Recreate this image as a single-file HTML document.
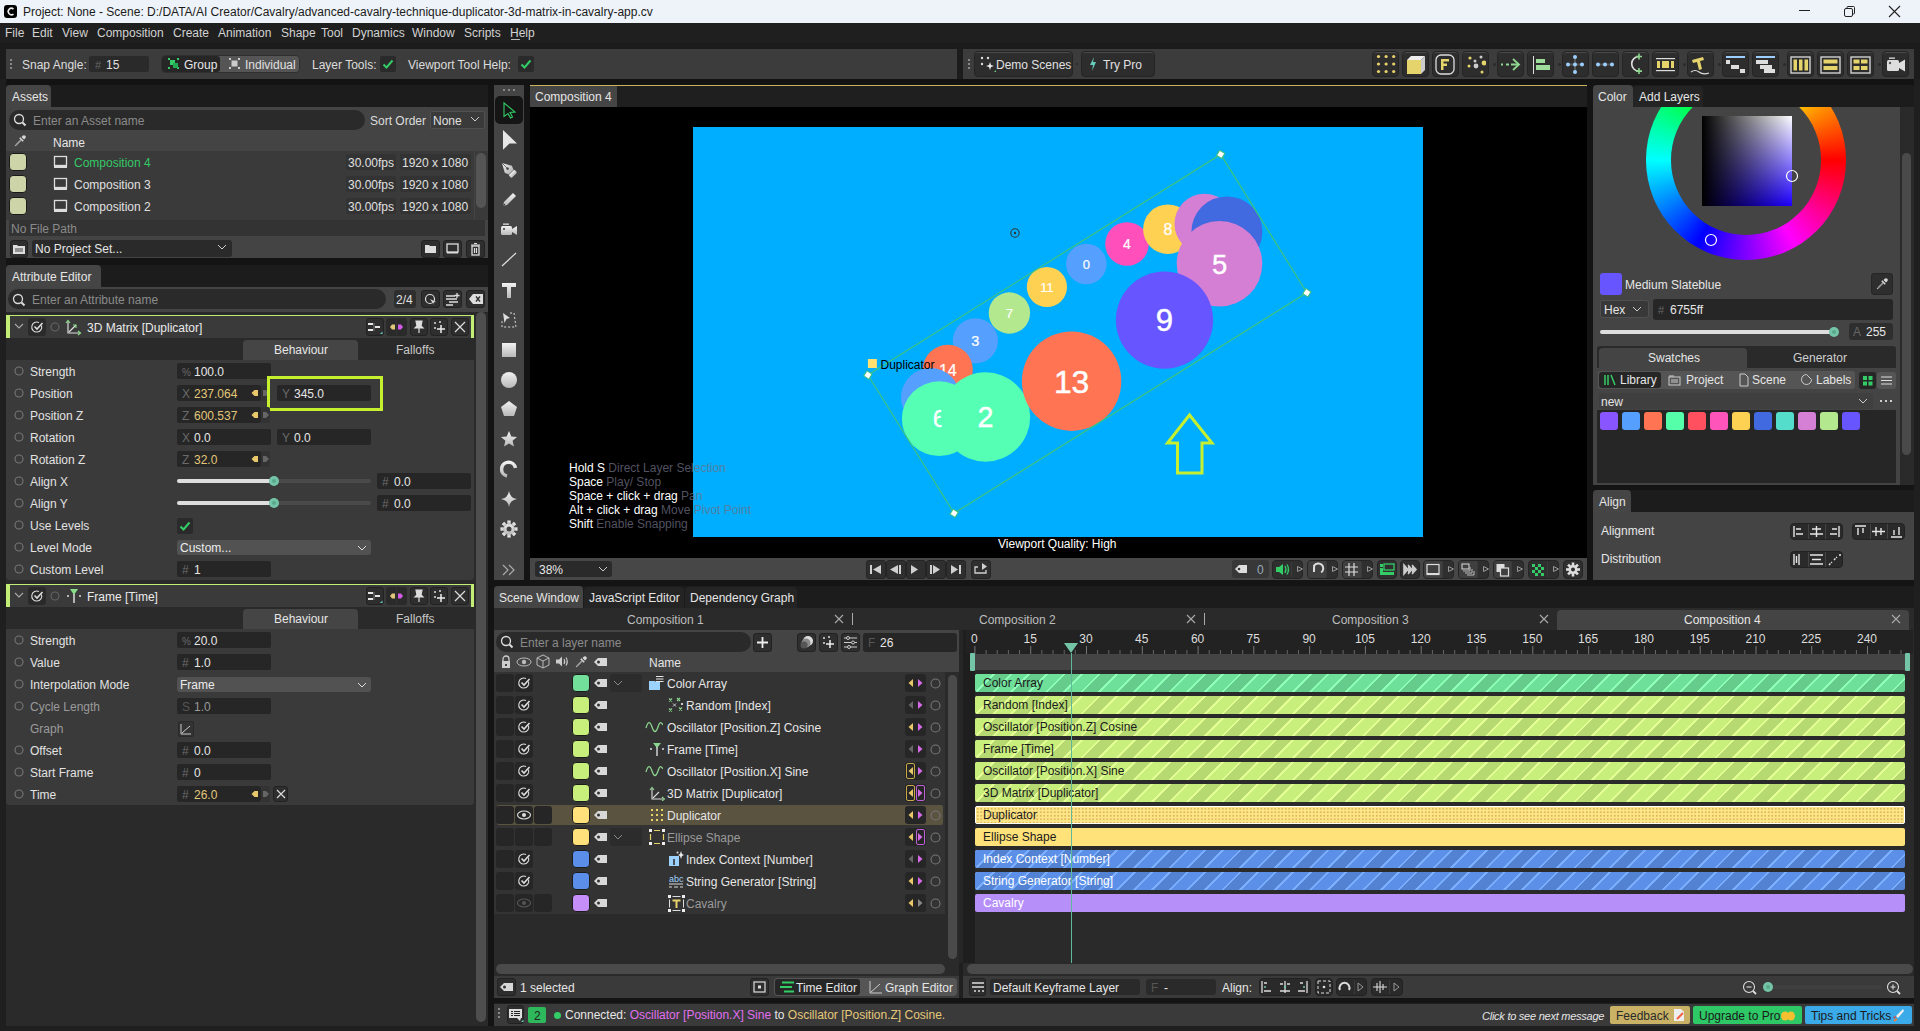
<!DOCTYPE html><html><head><meta charset="utf-8"><style>
*{margin:0;padding:0;box-sizing:border-box}
html,body{width:1920px;height:1031px;overflow:hidden;background:#1f1f1f;font-family:"Liberation Sans",sans-serif;font-size:12px;color:#d6d6d6}
.a{position:absolute}
.t{position:absolute;white-space:nowrap;line-height:14px}
</style></head><body><div class="a" style="left:0px;top:0px;width:1920px;height:23px;background:#eef3f9;"></div>
<div class="a" style="left:4px;top:5px;width:13px;height:13px;background:#000;border-radius:3px"></div>
<svg class="a" style="left:4px;top:5px;" width="13" height="13" viewBox="0 0 13 13"><path d="M9.5 4 A3.2 3.2 0 1 0 9.5 9" stroke="#eee" stroke-width="1.6" fill="none"/></svg>
<div class="t" style="left:23px;top:5px;font-size:12px;color:#1b1b1b;">Project: None - Scene: D:/DATA/AI Creator/Cavalry/advanced-cavalry-technique-duplicator-3d-matrix-in-cavalry-app.cv</div>
<div class="a" style="left:1799px;top:10px;width:11px;height:1px;background:#222;"></div>
<svg class="a" style="left:1843px;top:5px;" width="13" height="13" viewBox="0 0 13 13"><rect x="1.5" y="3.5" width="8" height="8" rx="1.5" fill="none" stroke="#222"/><path d="M4 3.5 V2.5 a1 1 0 0 1 1-1 H10.5 a1 1 0 0 1 1 1 V8 a1 1 0 0 1 -1 1 H9.5" fill="none" stroke="#222"/></svg>
<svg class="a" style="left:1888px;top:5px;" width="13" height="13" viewBox="0 0 13 13"><path d="M1 1 L12 12 M12 1 L1 12" stroke="#222" stroke-width="1.1"/></svg>
<div class="a" style="left:0px;top:23px;width:1920px;height:20px;background:#1f1f1f;"></div>
<div class="a" style="left:0px;top:43px;width:1920px;height:6px;background:#1b1b1b;"></div>
<div class="t" style="left:5px;top:26px;font-size:12px;color:#d2d2d2;">File</div>
<div class="t" style="left:32px;top:26px;font-size:12px;color:#d2d2d2;">Edit</div>
<div class="t" style="left:62px;top:26px;font-size:12px;color:#d2d2d2;">View</div>
<div class="t" style="left:97px;top:26px;font-size:12px;color:#d2d2d2;">Composition</div>
<div class="t" style="left:173px;top:26px;font-size:12px;color:#d2d2d2;">Create</div>
<div class="t" style="left:218px;top:26px;font-size:12px;color:#d2d2d2;">Animation</div>
<div class="t" style="left:281px;top:26px;font-size:12px;color:#d2d2d2;">Shape</div>
<div class="t" style="left:321px;top:26px;font-size:12px;color:#d2d2d2;">Tool</div>
<div class="t" style="left:352px;top:26px;font-size:12px;color:#d2d2d2;">Dynamics</div>
<div class="t" style="left:412px;top:26px;font-size:12px;color:#d2d2d2;">Window</div>
<div class="t" style="left:464px;top:26px;font-size:12px;color:#d2d2d2;">Scripts</div>
<div class="t" style="left:510px;top:26px;font-size:12px;color:#d2d2d2;">Help</div>
<div class="a" style="left:511px;top:39px;width:9px;height:1px;background:#bbb;"></div>
<div class="a" style="left:0px;top:49px;width:1920px;height:30px;background:#1c1c1c;"></div>
<div class="a" style="left:6px;top:49px;width:951px;height:30px;background:#3c3c3c;"></div>
<div class="a" style="left:963px;top:49px;width:951px;height:30px;background:#3c3c3c;"></div>
<div class="a" style="left:6px;top:79px;width:1908px;height:6px;background:#131313;"></div>
<div class="a" style="left:10px;top:59px;width:2px;height:2px;background:#888;"></div>
<div class="a" style="left:10px;top:63px;width:2px;height:2px;background:#888;"></div>
<div class="a" style="left:10px;top:67px;width:2px;height:2px;background:#888;"></div>
<div class="a" style="left:968px;top:59px;width:2px;height:2px;background:#888;"></div>
<div class="a" style="left:968px;top:63px;width:2px;height:2px;background:#888;"></div>
<div class="a" style="left:968px;top:67px;width:2px;height:2px;background:#888;"></div>
<div class="t" style="left:22px;top:58px;font-size:12px;color:#dcdcdc;">Snap Angle:</div>
<div class="a" style="left:89px;top:56px;width:60px;height:16px;background:#2a2a2a;border-radius:2px"></div>
<div class="t" style="left:95px;top:58px;font-size:11px;color:#666;">#</div>
<div class="t" style="left:106px;top:58px;font-size:12px;color:#e0e0e0;">15</div>
<div class="a" style="left:161px;top:55px;width:139px;height:18px;background:#555;border-radius:4px;border:1px solid #2f2f2f"></div>
<div class="a" style="left:162px;top:56px;width:58px;height:16px;background:#262626;border-radius:3px"></div>
<svg class="a" style="left:167px;top:57px;" width="13" height="13" viewBox="0 0 13 13"><rect x="1" y="1" width="2" height="2" fill="#3c6"/><rect x="10" y="1" width="2" height="2" fill="#3c6"/><rect x="1" y="10" width="2" height="2" fill="#3c6"/><rect x="10" y="10" width="2" height="2" fill="#3c6"/><rect x="3" y="3" width="5" height="5" fill="#3c6"/><rect x="6" y="6" width="5" height="5" fill="#2a5"/></svg>
<div class="t" style="left:184px;top:58px;font-size:12px;color:#e8e8e8;">Group</div>
<svg class="a" style="left:228px;top:57px;" width="13" height="13" viewBox="0 0 13 13"><rect x="1" y="1" width="2" height="2" fill="#ccc"/><rect x="10" y="1" width="2" height="2" fill="#ccc"/><rect x="1" y="10" width="2" height="2" fill="#ccc"/><rect x="10" y="10" width="2" height="2" fill="#ccc"/><rect x="3.5" y="3.5" width="6" height="6" fill="#ccc"/></svg>
<div class="t" style="left:245px;top:58px;font-size:12px;color:#e0e0e0;">Individual</div>
<div class="t" style="left:312px;top:58px;font-size:12px;color:#dcdcdc;">Layer Tools:</div>
<div class="a" style="left:380px;top:56px;width:16px;height:16px;background:#2a2a2a;border-radius:2px"></div>
<svg class="a" style="left:380px;top:56px;" width="16" height="16" viewBox="0 0 16 16"><path d="M3.5 8.5 L6.5 11.5 L12.5 4.5" stroke="#33cc66" stroke-width="2" fill="none"/></svg>
<div class="t" style="left:408px;top:58px;font-size:12px;color:#dcdcdc;">Viewport Tool Help:</div>
<div class="a" style="left:518px;top:56px;width:16px;height:16px;background:#2a2a2a;border-radius:2px"></div>
<svg class="a" style="left:518px;top:56px;" width="16" height="16" viewBox="0 0 16 16"><path d="M3.5 8.5 L6.5 11.5 L12.5 4.5" stroke="#33cc66" stroke-width="2" fill="none"/></svg>
<div class="a" style="left:974px;top:51px;width:99px;height:26px;background:#2d2d2d;border-radius:4px;border:1px solid #242424;box-shadow:inset 0 1px 0 #4a4a4a"></div>
<svg class="a" style="left:979px;top:55px;" width="18" height="18" viewBox="0 0 18 18"><circle cx="3" cy="3" r="1.2" fill="#ddd"/><circle cx="9" cy="3" r="1.2" fill="#ddd"/><circle cx="3" cy="9" r="1.2" fill="#ddd"/><path d="M11 7 L12 10 L15 11 L12 12 L11 15 L10 12 L7 11 L10 10Z" fill="#eee"/><path d="M15 17 L17 15 V17Z" fill="#6c8"/></svg>
<div class="t" style="left:996px;top:58px;font-size:12px;color:#e0e0e0;">Demo Scenes</div>
<div class="a" style="left:1076px;top:63px;width:2px;height:2px;background:#2a2a2a;border-radius:1px"></div>
<div class="a" style="left:1081px;top:51px;width:74px;height:26px;background:#2d2d2d;border-radius:4px;border:1px solid #242424;box-shadow:inset 0 1px 0 #4a4a4a"></div>
<svg class="a" style="left:1088px;top:56px;" width="10" height="16" viewBox="0 0 10 16"><path d="M6 1 L2 9 H5 L4 15 L8 6 H5 Z" fill="#6cb"/></svg>
<div class="t" style="left:1103px;top:58px;font-size:12px;color:#e0e0e0;">Try Pro</div>
<div class="a" style="left:1372px;top:51px;width:27px;height:26px;background:#2d2d2d;border-radius:4px;border:1px solid #242424;box-shadow:inset 0 1px 0 #4a4a4a"></div>
<div class="a" style="left:1402px;top:51px;width:27px;height:26px;background:#2d2d2d;border-radius:4px;border:1px solid #242424;box-shadow:inset 0 1px 0 #4a4a4a"></div>
<div class="a" style="left:1432px;top:51px;width:27px;height:26px;background:#2d2d2d;border-radius:4px;border:1px solid #242424;box-shadow:inset 0 1px 0 #4a4a4a"></div>
<div class="a" style="left:1462px;top:51px;width:27px;height:26px;background:#2d2d2d;border-radius:4px;border:1px solid #242424;box-shadow:inset 0 1px 0 #4a4a4a"></div>
<div class="a" style="left:1497px;top:51px;width:27px;height:26px;background:#2d2d2d;border-radius:4px;border:1px solid #242424;box-shadow:inset 0 1px 0 #4a4a4a"></div>
<div class="a" style="left:1527px;top:51px;width:27px;height:26px;background:#2d2d2d;border-radius:4px;border:1px solid #242424;box-shadow:inset 0 1px 0 #4a4a4a"></div>
<div class="a" style="left:1562px;top:51px;width:27px;height:26px;background:#2d2d2d;border-radius:4px;border:1px solid #242424;box-shadow:inset 0 1px 0 #4a4a4a"></div>
<div class="a" style="left:1592px;top:51px;width:27px;height:26px;background:#2d2d2d;border-radius:4px;border:1px solid #242424;box-shadow:inset 0 1px 0 #4a4a4a"></div>
<div class="a" style="left:1622px;top:51px;width:27px;height:26px;background:#2d2d2d;border-radius:4px;border:1px solid #242424;box-shadow:inset 0 1px 0 #4a4a4a"></div>
<div class="a" style="left:1652px;top:51px;width:27px;height:26px;background:#2d2d2d;border-radius:4px;border:1px solid #242424;box-shadow:inset 0 1px 0 #4a4a4a"></div>
<div class="a" style="left:1687px;top:51px;width:27px;height:26px;background:#2d2d2d;border-radius:4px;border:1px solid #242424;box-shadow:inset 0 1px 0 #4a4a4a"></div>
<div class="a" style="left:1722px;top:51px;width:27px;height:26px;background:#2d2d2d;border-radius:4px;border:1px solid #242424;box-shadow:inset 0 1px 0 #4a4a4a"></div>
<div class="a" style="left:1752px;top:51px;width:27px;height:26px;background:#2d2d2d;border-radius:4px;border:1px solid #242424;box-shadow:inset 0 1px 0 #4a4a4a"></div>
<div class="a" style="left:1787px;top:51px;width:27px;height:26px;background:#2d2d2d;border-radius:4px;border:1px solid #242424;box-shadow:inset 0 1px 0 #4a4a4a"></div>
<div class="a" style="left:1817px;top:51px;width:27px;height:26px;background:#2d2d2d;border-radius:4px;border:1px solid #242424;box-shadow:inset 0 1px 0 #4a4a4a"></div>
<div class="a" style="left:1847px;top:51px;width:27px;height:26px;background:#2d2d2d;border-radius:4px;border:1px solid #242424;box-shadow:inset 0 1px 0 #4a4a4a"></div>
<div class="a" style="left:1882px;top:51px;width:27px;height:26px;background:#2d2d2d;border-radius:4px;border:1px solid #242424;box-shadow:inset 0 1px 0 #4a4a4a"></div>
<div class="a" style="left:1493px;top:63px;width:3px;height:3px;background:#2a2a2a;border-radius:2px"></div>
<div class="a" style="left:1558px;top:63px;width:3px;height:3px;background:#2a2a2a;border-radius:2px"></div>
<div class="a" style="left:1683px;top:63px;width:3px;height:3px;background:#2a2a2a;border-radius:2px"></div>
<div class="a" style="left:1718px;top:63px;width:3px;height:3px;background:#2a2a2a;border-radius:2px"></div>
<div class="a" style="left:1783px;top:63px;width:3px;height:3px;background:#2a2a2a;border-radius:2px"></div>
<div class="a" style="left:1878px;top:63px;width:3px;height:3px;background:#2a2a2a;border-radius:2px"></div>
<svg class="a" style="left:1375px;top:53px;" width="23" height="23" viewBox="0 0 23 23"><circle cx="3.5" cy="3.5" r="1.6" fill="#e8d36a"/><circle cx="3.5" cy="11.0" r="1.6" fill="#e8d36a"/><circle cx="3.5" cy="18.5" r="1.6" fill="#e8d36a"/><circle cx="11.1" cy="3.5" r="1.6" fill="#e8d36a"/><circle cx="11.1" cy="11.0" r="1.6" fill="#e8d36a"/><circle cx="11.1" cy="18.5" r="1.6" fill="#e8d36a"/><circle cx="18.7" cy="3.5" r="1.6" fill="#e8d36a"/><circle cx="18.7" cy="11.0" r="1.6" fill="#e8d36a"/><circle cx="18.7" cy="18.5" r="1.6" fill="#e8d36a"/></svg>
<svg class="a" style="left:1404px;top:53px;" width="23" height="23" viewBox="0 0 23 23"><path d="M3 7 L7 3 H21 L17 7Z" fill="#eee"/><path d="M17 7 L21 3 V17 L17 21Z" fill="#ccc"/><rect x="3" y="7" width="14" height="14" fill="#e5d36b"/></svg>
<svg class="a" style="left:1434px;top:53px;" width="22" height="22" viewBox="0 0 22 22"><rect x="2" y="2" width="18" height="19" rx="5" fill="none" stroke="#ddd" stroke-width="1.3"/><rect x="7" y="6" width="2.5" height="11" fill="#e5d36b"/><rect x="9" y="6" width="6" height="2.5" fill="#e5d36b"/><rect x="9" y="10.5" width="4" height="2.5" fill="#e5d36b"/></svg>
<svg class="a" style="left:1464px;top:53px;" width="22" height="22" viewBox="0 0 22 22"><circle cx="6" cy="5" r="1.6" fill="#e5d36b"/><circle cx="17" cy="4" r="1.5" fill="#ccc"/><circle cx="11" cy="8" r="1.5" fill="#ccc"/><circle cx="20" cy="10" r="2.4" fill="#e5d36b"/><circle cx="5" cy="13" r="1.5" fill="#e5d36b"/><circle cx="12" cy="13" r="2.4" fill="#ccc"/><circle cx="18" cy="19" r="1.5" fill="#e5d36b"/></svg>
<svg class="a" style="left:1499px;top:53px;" width="22" height="22" viewBox="0 0 22 22"><path d="M2 11.5 H4 M7 11.5 H10 M12 11.5 H19" stroke="#8fd68f" stroke-width="2"/><path d="M14 6 L20 11.5 L14 17" stroke="#8fd68f" stroke-width="1.8" fill="none"/></svg>
<svg class="a" style="left:1529px;top:53px;" width="22" height="22" viewBox="0 0 22 22"><rect x="4" y="3" width="1" height="18" fill="#ddd"/><rect x="7" y="6" width="9" height="4" fill="#9ddc9a"/><rect x="7" y="12" width="14" height="5" fill="#9ddc9a"/></svg>
<svg class="a" style="left:1564px;top:53px;" width="22" height="22" viewBox="0 0 22 22"><rect x="10" y="3" width="2" height="17" fill="#555"/><rect x="3" y="10.5" width="17" height="2" fill="#555"/><circle cx="11" cy="4" r="2" fill="#9ccfff"/><circle cx="11" cy="11.5" r="2" fill="#9ccfff"/><circle cx="11" cy="19" r="2" fill="#9ccfff"/><circle cx="4" cy="11.5" r="2" fill="#9ccfff"/><circle cx="18" cy="11.5" r="2" fill="#9ccfff"/></svg>
<svg class="a" style="left:1594px;top:53px;" width="22" height="22" viewBox="0 0 22 22"><rect x="3" y="10.5" width="16" height="2" fill="#555"/><circle cx="4" cy="11.5" r="2" fill="#9ccfff"/><circle cx="11" cy="11.5" r="2" fill="#9ccfff"/><circle cx="18" cy="11.5" r="2" fill="#9ccfff"/></svg>
<svg class="a" style="left:1624px;top:53px;" width="22" height="22" viewBox="0 0 22 22"><path d="M15 3.5 A7.3 7.3 0 0 0 15 18.1" stroke="#ddd" stroke-width="1.6" fill="none"/><path d="M15 0.5 V6.5 M12 3.5 H18 M15 15.1 V21.1 M12 18.1 H18" stroke="#8fd68f" stroke-width="1.6"/></svg>
<svg class="a" style="left:1654px;top:53px;" width="22" height="22" viewBox="0 0 22 22"><rect x="2" y="5" width="19" height="1.2" fill="#ddd"/><rect x="2" y="17" width="19" height="1.2" fill="#ddd"/><rect x="3" y="8" width="3" height="7" fill="#e5d36b"/><rect x="8" y="8" width="7" height="7" fill="#e5d36b"/><rect x="17" y="8" width="3" height="7" fill="#e5d36b"/></svg>
<svg class="a" style="left:1689px;top:53px;" width="22" height="22" viewBox="0 0 22 22"><path d="M3 7 L14 4 L15 7 L11 8 L13 16 L10 17 L8 9 L4 10Z" fill="#e5d36b"/><path d="M2 19 Q6 16 10 19 T20 20" stroke="#ddd" stroke-width="1.2" fill="none"/></svg>
<svg class="a" style="left:1724px;top:53px;" width="22" height="22" viewBox="0 0 22 22"><rect x="2" y="3" width="19" height="2" fill="#9ccfff"/><rect x="2" y="7" width="4" height="4" fill="#ddd"/><rect x="7" y="12" width="8" height="4" fill="#ddd"/><rect x="16" y="16" width="5" height="4" fill="#ddd"/></svg>
<svg class="a" style="left:1754px;top:53px;" width="22" height="22" viewBox="0 0 22 22"><rect x="2" y="3" width="19" height="2" fill="#9ccfff"/><rect x="2" y="7" width="12" height="4" fill="#ddd"/><rect x="6" y="12" width="12" height="4" fill="#ddd"/><rect x="10" y="16" width="11" height="4" fill="#ddd"/></svg>
<svg class="a" style="left:1789px;top:53px;" width="22" height="22" viewBox="0 0 22 22"><rect x="2" y="4" width="19" height="16" fill="none" stroke="#ddd" stroke-width="1.3"/><rect x="4.5" y="6.5" width="3.5" height="11" fill="#e5d36b"/><rect x="10" y="6.5" width="3.5" height="11" fill="#e5d36b"/><rect x="15.5" y="6.5" width="3.5" height="11" fill="#e5d36b"/></svg>
<svg class="a" style="left:1819px;top:53px;" width="22" height="22" viewBox="0 0 22 22"><rect x="2" y="4" width="19" height="16" fill="none" stroke="#ddd" stroke-width="1.3"/><rect x="4.5" y="6.5" width="14" height="4" fill="#e5d36b"/><rect x="4.5" y="13" width="14" height="4" fill="#e5d36b"/></svg>
<svg class="a" style="left:1849px;top:53px;" width="22" height="22" viewBox="0 0 22 22"><rect x="2" y="4" width="19" height="16" fill="none" stroke="#ddd" stroke-width="1.3"/><rect x="4.5" y="6.5" width="6" height="4" fill="#e5d36b"/><rect x="12" y="6.5" width="6.5" height="4" fill="#e5d36b"/><rect x="4.5" y="13" width="6" height="4" fill="#e5d36b"/><rect x="12" y="13" width="6.5" height="4" fill="#e5d36b"/></svg>
<svg class="a" style="left:1884px;top:53px;" width="22" height="22" viewBox="0 0 22 22"><rect x="3" y="7" width="12" height="11" rx="1.5" fill="#ddd"/><path d="M15 10 L21 6.5 V18.5 L15 15Z" fill="#ddd"/><rect x="5" y="4.5" width="6" height="1.3" fill="#ddd"/><circle cx="6" cy="10" r="1.2" fill="#555"/></svg>
<div class="a" style="left:6px;top:85px;width:482px;height:22px;background:#1c1c1c;"></div>
<div class="a" style="left:6px;top:85px;width:45px;height:22px;background:#454545;border-radius:4px 4px 0 0"></div>
<div class="t" style="left:12px;top:90px;font-size:12px;color:#e6e6e6;">Assets</div>
<div class="a" style="left:6px;top:107px;width:482px;height:151px;background:#444;"></div>
<div class="a" style="left:9px;top:110px;width:356px;height:20px;background:#2a2a2a;border-radius:10px"></div>
<svg class="a" style="left:13px;top:113px;" width="14" height="14" viewBox="0 0 14 14"><circle cx="6" cy="6" r="4.5" stroke="#ddd" stroke-width="1.3" fill="none"/><path d="M9.5 9.5 L12.5 12.5" stroke="#ddd" stroke-width="2"/></svg>
<div class="t" style="left:33px;top:114px;font-size:12px;color:#8a8a8a;">Enter an Asset name</div>
<div class="t" style="left:370px;top:114px;font-size:12px;color:#dcdcdc;">Sort Order</div>
<div class="a" style="left:430px;top:111px;width:55px;height:18px;background:#3a3a3a;border-radius:2px;border:1px solid #505050"></div>
<div class="t" style="left:433px;top:114px;font-size:12px;color:#e0e0e0;">None</div>
<svg class="a" style="left:470px;top:116px;" width="10" height="6" viewBox="0 0 10 6"><path d="M1 1 L5 5 L9 1" stroke="#ccc" fill="none"/></svg>
<svg class="a" style="left:13px;top:134px;" width="14" height="14" viewBox="0 0 14 14"><path d="M8.5 3 L10 1.5 a1.8 1.8 0 0 1 2.5 2.5 L11 5.5 Z" fill="#d8d8d8"/><path d="M6.8 3.8 L10.2 7.2" stroke="#d8d8d8" stroke-width="1.6"/><path d="M8 5.5 L2.8 10.7 L2.2 11.8 L3.3 11.2 L8.5 6" fill="none" stroke="#bbb" stroke-width="1"/></svg>
<div class="t" style="left:53px;top:136px;font-size:12px;color:#e6e6e6;">Name</div>
<div class="a" style="left:6px;top:151px;width:468px;height:69px;background:#3a3a3a;"></div>
<div class="a" style="left:9px;top:153px;width:18px;height:18px;background:#cdd4a7;border-radius:4px;border:1px solid #1a1a1a"></div>
<svg class="a" style="left:53px;top:155px;" width="15" height="14" viewBox="0 0 15 14"><rect x="1.5" y="1.5" width="12" height="9" fill="none" stroke="#ddd" stroke-width="1.3"/><rect x="1" y="11" width="13" height="2" fill="#ddd"/></svg>
<div class="t" style="left:74px;top:156px;font-size:12px;color:#35c866;">Composition 4</div>
<div class="a" style="left:346px;top:154px;width:50px;height:16px;background:#333;border-radius:2px"></div>
<div class="t" style="left:348px;top:156px;font-size:12px;color:#e0e0e0;">30.00fps</div>
<div class="a" style="left:400px;top:154px;width:71px;height:16px;background:#333;border-radius:2px"></div>
<div class="t" style="left:402px;top:156px;font-size:12px;color:#e0e0e0;">1920 x 1080</div>
<div class="a" style="left:9px;top:175px;width:18px;height:18px;background:#cdd4a7;border-radius:4px;border:1px solid #1a1a1a"></div>
<svg class="a" style="left:53px;top:177px;" width="15" height="14" viewBox="0 0 15 14"><rect x="1.5" y="1.5" width="12" height="9" fill="none" stroke="#ddd" stroke-width="1.3"/><rect x="1" y="11" width="13" height="2" fill="#ddd"/></svg>
<div class="t" style="left:74px;top:178px;font-size:12px;color:#e0e0e0;">Composition 3</div>
<div class="a" style="left:346px;top:176px;width:50px;height:16px;background:#333;border-radius:2px"></div>
<div class="t" style="left:348px;top:178px;font-size:12px;color:#e0e0e0;">30.00fps</div>
<div class="a" style="left:400px;top:176px;width:71px;height:16px;background:#333;border-radius:2px"></div>
<div class="t" style="left:402px;top:178px;font-size:12px;color:#e0e0e0;">1920 x 1080</div>
<div class="a" style="left:9px;top:197px;width:18px;height:18px;background:#cdd4a7;border-radius:4px;border:1px solid #1a1a1a"></div>
<svg class="a" style="left:53px;top:199px;" width="15" height="14" viewBox="0 0 15 14"><rect x="1.5" y="1.5" width="12" height="9" fill="none" stroke="#ddd" stroke-width="1.3"/><rect x="1" y="11" width="13" height="2" fill="#ddd"/></svg>
<div class="t" style="left:74px;top:200px;font-size:12px;color:#e0e0e0;">Composition 2</div>
<div class="a" style="left:346px;top:198px;width:50px;height:16px;background:#333;border-radius:2px"></div>
<div class="t" style="left:348px;top:200px;font-size:12px;color:#e0e0e0;">30.00fps</div>
<div class="a" style="left:400px;top:198px;width:71px;height:16px;background:#333;border-radius:2px"></div>
<div class="t" style="left:402px;top:200px;font-size:12px;color:#e0e0e0;">1920 x 1080</div>
<div class="a" style="left:475px;top:151px;width:13px;height:69px;background:#3a3a3a;"></div>
<div class="a" style="left:476px;top:153px;width:10px;height:55px;background:#555;border-radius:5px"></div>
<div class="a" style="left:9px;top:220px;width:476px;height:16px;background:#333;"></div>
<div class="t" style="left:11px;top:222px;font-size:12px;color:#8a8a8a;">No File Path</div>
<div class="a" style="left:10px;top:240px;width:18px;height:18px;background:#2e2e2e;border-radius:3px;border:1px solid #222"></div>
<svg class="a" style="left:12px;top:243px;" width="14" height="12" viewBox="0 0 14 12"><path d="M1 2 H5 L6 3 H13 V11 H1Z" fill="#ddd"/><path d="M3 6 H11 M3 8 H11" stroke="#444" stroke-width="1"/></svg>
<div class="a" style="left:32px;top:240px;width:200px;height:17px;background:#2a2a2a;border-radius:3px"></div>
<div class="t" style="left:35px;top:242px;font-size:12px;color:#e6e6e6;">No Project Set...</div>
<svg class="a" style="left:217px;top:244px;" width="10" height="6" viewBox="0 0 10 6"><path d="M1 1 L5 5 L9 1" stroke="#ccc" fill="none"/></svg>
<div class="a" style="left:421px;top:240px;width:19px;height:18px;background:#2e2e2e;border-radius:3px;border:1px solid #222"></div>
<svg class="a" style="left:424px;top:243px;" width="13" height="11" viewBox="0 0 13 11"><path d="M1 2 H5 L6 3 H12 V10 H1Z" fill="#ddd"/></svg>
<div class="a" style="left:443px;top:240px;width:19px;height:18px;background:#2e2e2e;border-radius:3px;border:1px solid #222"></div>
<svg class="a" style="left:446px;top:243px;" width="13" height="11" viewBox="0 0 13 11"><rect x="1" y="1" width="11" height="8" fill="none" stroke="#ddd" stroke-width="1.3"/><rect x="1" y="9" width="11" height="1.5" fill="#ddd"/></svg>
<div class="a" style="left:466px;top:240px;width:19px;height:18px;background:#2e2e2e;border-radius:3px;border:1px solid #222"></div>
<svg class="a" style="left:469px;top:242px;" width="13" height="14" viewBox="0 0 13 14"><rect x="3" y="4" width="7" height="9" fill="none" stroke="#ddd" stroke-width="1.3"/><path d="M2 3 H11 M5 1.5 H8 M5.5 6 V11 M7.5 6 V11" stroke="#ddd" stroke-width="1.2"/></svg>
<div class="a" style="left:6px;top:258px;width:482px;height:7px;background:#1c1c1c;"></div>
<div class="a" style="left:6px;top:265px;width:482px;height:22px;background:#1c1c1c;"></div>
<div class="a" style="left:6px;top:265px;width:95px;height:22px;background:#454545;border-radius:4px 4px 0 0"></div>
<div class="t" style="left:12px;top:270px;font-size:12px;color:#e6e6e6;">Attribute Editor</div>
<div class="a" style="left:6px;top:287px;width:482px;height:25px;background:#444;"></div>
<div class="a" style="left:8px;top:289px;width:378px;height:20px;background:#2a2a2a;border-radius:10px"></div>
<svg class="a" style="left:12px;top:293px;" width="14" height="14" viewBox="0 0 14 14"><circle cx="6" cy="6" r="4.5" stroke="#ddd" stroke-width="1.3" fill="none"/><path d="M9.5 9.5 L12.5 12.5" stroke="#ddd" stroke-width="2"/></svg>
<div class="t" style="left:32px;top:293px;font-size:12px;color:#8a8a8a;">Enter an Attribute name</div>
<div class="a" style="left:394px;top:290px;width:22px;height:18px;background:#2e2e2e;border-radius:3px"></div>
<div class="t" style="left:396px;top:293px;font-size:12px;color:#e0e0e0;">2/4</div>
<div class="a" style="left:421px;top:290px;width:19px;height:18px;background:#2e2e2e;border-radius:3px;border:1px solid #222"></div>
<svg class="a" style="left:423px;top:292px;" width="15" height="15" viewBox="0 0 15 15"><circle cx="7" cy="7" r="4.5" stroke="#ddd" stroke-width="1.2" fill="none"/><path d="M7 7 L13 10 L10 10.5 L11 13Z" fill="#ddd"/></svg>
<div class="a" style="left:443px;top:290px;width:19px;height:18px;background:#2e2e2e;border-radius:3px;border:1px solid #222"></div>
<svg class="a" style="left:445px;top:292px;" width="15" height="14" viewBox="0 0 15 14"><path d="M1 4 H10 M1 7 H12 M4 10 H13 M1 13 H8" stroke="#ddd" stroke-width="1.6"/><path d="M12 1 V6 M9.5 3.5 H14.5" stroke="#ddd" stroke-width="1.3"/></svg>
<div class="a" style="left:466px;top:290px;width:19px;height:18px;background:#2e2e2e;border-radius:3px;border:1px solid #222"></div>
<svg class="a" style="left:468px;top:293px;" width="16" height="12" viewBox="0 0 16 12"><path d="M5 1 H15 V11 H5 L1 6Z" fill="#ddd"/><path d="M8 3.5 L12 8.5 M12 3.5 L8 8.5" stroke="#333" stroke-width="1.4"/></svg>
<div class="a" style="left:6px;top:312px;width:482px;height:716px;background:#2a2a2a;"></div>
<div class="a" style="left:476px;top:312px;width:10px;height:710px;background:#4e4e4e;border-radius:5px"></div>
<div class="a" style="left:6px;top:315px;width:468px;height:23px;background:#3a3a3a;border-left:4px solid #c3ee76;border-top:1px solid #c3ee76;border-right:3px solid #c3ee76"></div>
<svg class="a" style="left:14px;top:323px;" width="10" height="7" viewBox="0 0 10 7"><path d="M1 1 L5 5 L9 1" stroke="#aaa" fill="none" stroke-width="1.1"/></svg>
<div class="a" style="left:28px;top:318px;width:18px;height:18px;background:#2a2a2a;border-radius:3px"></div>
<svg class="a" style="left:30px;top:320px;" width="14" height="14" viewBox="0 0 14 14"><path d="M11.5 5.5 A5 5 0 1 1 9 2.6" stroke="#ddd" stroke-width="1.1" fill="none"/><path d="M4.5 6.5 L7 9 L12.5 3" stroke="#ddd" stroke-width="1.6" fill="none"/></svg>
<svg class="a" style="left:50px;top:322px;" width="10" height="10" viewBox="0 0 10 10"><circle cx="5" cy="5" r="4" stroke="#666" stroke-width="1.1" fill="none"/></svg>
<svg class="a" style="left:65px;top:318px" width="18" height="18" viewBox="0 0 18 18"><path d="M3 3 V15 H15" stroke="#ddd" stroke-width="1.2" fill="none"/><path d="M4 14 L11 7" stroke="#ddd" stroke-width="1.2"/><path d="M1 5 L3 2.5 L5 5 M13 13 L15.5 15 L13 17" stroke="#8d8" stroke-width="1.2" fill="none"/><path d="M8 7 H11 V10" stroke="#8d8" stroke-width="1.1" fill="none"/></svg>
<div class="t" style="left:87px;top:321px;font-size:12px;color:#eaeaea;">3D Matrix [Duplicator]</div>
<div class="a" style="left:366px;top:318px;width:18px;height:18px;background:#2e2e2e;border-radius:3px;border:1px solid #222"></div>
<svg class="a" style="left:366px;top:318px;" width="18" height="18" viewBox="0 0 18 18"><rect x="2" y="5" width="5" height="2" fill="#e6e6e6"/><rect x="2" y="11" width="5" height="2" fill="#e6e6e6"/><rect x="9" y="8" width="5" height="2" fill="#e6e6e6"/><rect x="7.5" y="5" width="1" height="8" fill="#777"/><path d="M14 16 L16.5 13.5 V16Z" fill="#6cc"/></svg>
<div class="a" style="left:386px;top:318px;width:21px;height:18px;background:#2a2a2a;border-radius:3px"></div>
<div class="a" style="left:396px;top:319px;width:1px;height:16px;background:#333;"></div>
<svg class="a" style="left:386px;top:318px;" width="21" height="18" viewBox="0 0 21 18"><path d="M4 9 L6 6.5 H9 V11.5 H6Z" fill="#e2c87a"/><path d="M12 6.5 H15 L17 9 L15 11.5 H12Z" fill="#d65ae8"/></svg>
<div class="a" style="left:410px;top:318px;width:18px;height:18px;background:#2e2e2e;border-radius:3px;border:1px solid #222"></div>
<svg class="a" style="left:413px;top:320px;" width="12" height="14" viewBox="0 0 12 14"><path d="M3 1 H9 L8 6 L10 8 H2 L4 6Z M6 8 V13" fill="#ddd" stroke="#ddd" stroke-width="1.2"/></svg>
<div class="a" style="left:430px;top:318px;width:18px;height:18px;background:#2e2e2e;border-radius:3px;border:1px solid #222"></div>
<svg class="a" style="left:432px;top:320px;" width="14" height="14" viewBox="0 0 14 14"><circle cx="3" cy="3" r="1" fill="#ddd"/><circle cx="8" cy="2" r="1" fill="#ddd"/><circle cx="3" cy="8" r="1" fill="#ddd"/><path d="M9 5 V13 M5 9 H13" stroke="#eee" stroke-width="1.5"/></svg>
<div class="a" style="left:451px;top:318px;width:18px;height:18px;background:#2e2e2e;border-radius:3px;border:1px solid #222"></div>
<svg class="a" style="left:454px;top:321px;" width="12" height="12" viewBox="0 0 12 12"><path d="M1 1 L11 11 M11 1 L1 11" stroke="#ddd" stroke-width="1.2"/></svg>
<div class="a" style="left:6px;top:338px;width:468px;height:22px;background:#2a2a2a;"></div>
<div class="a" style="left:243px;top:340px;width:115px;height:20px;background:#454545;border-radius:4px 4px 0 0"></div>
<div class="t" style="left:274px;top:343px;font-size:12px;color:#e6e6e6;">Behaviour</div>
<div class="t" style="left:396px;top:343px;font-size:12px;color:#c8c8c8;">Falloffs</div>
<div class="a" style="left:6px;top:360px;width:468px;height:220px;background:#3a3a3a;border-radius:0 0 3px 3px"></div>
<svg class="a" style="left:14px;top:366px;" width="10" height="10" viewBox="0 0 10 10"><circle cx="5" cy="5" r="4" stroke="#777" stroke-width="1.1" fill="none"/></svg>
<div class="t" style="left:30px;top:365px;font-size:12px;color:#e2e2e2;">Strength</div>
<svg class="a" style="left:14px;top:388px;" width="10" height="10" viewBox="0 0 10 10"><circle cx="5" cy="5" r="4" stroke="#777" stroke-width="1.1" fill="none"/></svg>
<div class="t" style="left:30px;top:387px;font-size:12px;color:#e2e2e2;">Position</div>
<svg class="a" style="left:14px;top:410px;" width="10" height="10" viewBox="0 0 10 10"><circle cx="5" cy="5" r="4" stroke="#777" stroke-width="1.1" fill="none"/></svg>
<div class="t" style="left:30px;top:409px;font-size:12px;color:#e2e2e2;">Position Z</div>
<svg class="a" style="left:14px;top:432px;" width="10" height="10" viewBox="0 0 10 10"><circle cx="5" cy="5" r="4" stroke="#777" stroke-width="1.1" fill="none"/></svg>
<div class="t" style="left:30px;top:431px;font-size:12px;color:#e2e2e2;">Rotation</div>
<svg class="a" style="left:14px;top:454px;" width="10" height="10" viewBox="0 0 10 10"><circle cx="5" cy="5" r="4" stroke="#777" stroke-width="1.1" fill="none"/></svg>
<div class="t" style="left:30px;top:453px;font-size:12px;color:#e2e2e2;">Rotation Z</div>
<svg class="a" style="left:14px;top:476px;" width="10" height="10" viewBox="0 0 10 10"><circle cx="5" cy="5" r="4" stroke="#777" stroke-width="1.1" fill="none"/></svg>
<div class="t" style="left:30px;top:475px;font-size:12px;color:#e2e2e2;">Align X</div>
<svg class="a" style="left:14px;top:498px;" width="10" height="10" viewBox="0 0 10 10"><circle cx="5" cy="5" r="4" stroke="#777" stroke-width="1.1" fill="none"/></svg>
<div class="t" style="left:30px;top:497px;font-size:12px;color:#e2e2e2;">Align Y</div>
<svg class="a" style="left:14px;top:520px;" width="10" height="10" viewBox="0 0 10 10"><circle cx="5" cy="5" r="4" stroke="#777" stroke-width="1.1" fill="none"/></svg>
<div class="t" style="left:30px;top:519px;font-size:12px;color:#e2e2e2;">Use Levels</div>
<svg class="a" style="left:14px;top:542px;" width="10" height="10" viewBox="0 0 10 10"><circle cx="5" cy="5" r="4" stroke="#777" stroke-width="1.1" fill="none"/></svg>
<div class="t" style="left:30px;top:541px;font-size:12px;color:#e2e2e2;">Level Mode</div>
<svg class="a" style="left:14px;top:564px;" width="10" height="10" viewBox="0 0 10 10"><circle cx="5" cy="5" r="4" stroke="#777" stroke-width="1.1" fill="none"/></svg>
<div class="t" style="left:30px;top:563px;font-size:12px;color:#e2e2e2;">Custom Level</div>
<div class="a" style="left:177px;top:363px;width:94px;height:16px;background:#262626;border-radius:2px"></div>
<div class="t" style="left:182px;top:366px;font-size:10px;color:#6a6a6a;">%</div>
<div class="t" style="left:194px;top:365px;font-size:12px;color:#e6e6e6;">100.0</div>
<div class="a" style="left:177px;top:385px;width:84px;height:16px;background:#262626;border-radius:2px"></div>
<div class="t" style="left:182px;top:387px;font-size:12px;color:#6a6a6a;">X</div>
<div class="t" style="left:194px;top:387px;font-size:12px;color:#e2c77a;">237.064</div>
<div class="a" style="left:261px;top:385px;width:9px;height:16px;background:#333;border-radius:0 2px 2px 0"></div>
<svg class="a" style="left:250px;top:385px;" width="22" height="16" viewBox="0 0 22 16"><path d="M1.5 8 L4.5 5 H8 V11 H4.5Z" fill="#e8c86a"/><path d="M13 5 H16 L19 8 L16 11 H13Z" fill="#666"/></svg>
<div class="a" style="left:277px;top:385px;width:94px;height:16px;background:#262626;border-radius:2px"></div>
<div class="t" style="left:282px;top:387px;font-size:12px;color:#6a6a6a;">Y</div>
<div class="t" style="left:294px;top:387px;font-size:12px;color:#e6e6e6;">345.0</div>
<div class="a" style="left:267px;top:376px;width:116px;height:35px;background:none;border:3px solid #c6f02f"></div>
<div class="a" style="left:177px;top:407px;width:84px;height:16px;background:#262626;border-radius:2px"></div>
<div class="t" style="left:182px;top:409px;font-size:12px;color:#6a6a6a;">Z</div>
<div class="t" style="left:194px;top:409px;font-size:12px;color:#e2c77a;">600.537</div>
<div class="a" style="left:261px;top:407px;width:9px;height:16px;background:#333;border-radius:0 2px 2px 0"></div>
<svg class="a" style="left:250px;top:407px;" width="22" height="16" viewBox="0 0 22 16"><path d="M1.5 8 L4.5 5 H8 V11 H4.5Z" fill="#e8c86a"/><path d="M13 5 H16 L19 8 L16 11 H13Z" fill="#666"/></svg>
<div class="a" style="left:177px;top:429px;width:94px;height:16px;background:#262626;border-radius:2px"></div>
<div class="t" style="left:182px;top:431px;font-size:12px;color:#6a6a6a;">X</div>
<div class="t" style="left:194px;top:431px;font-size:12px;color:#e6e6e6;">0.0</div>
<div class="a" style="left:277px;top:429px;width:94px;height:16px;background:#262626;border-radius:2px"></div>
<div class="t" style="left:282px;top:431px;font-size:12px;color:#6a6a6a;">Y</div>
<div class="t" style="left:294px;top:431px;font-size:12px;color:#e6e6e6;">0.0</div>
<div class="a" style="left:177px;top:451px;width:84px;height:16px;background:#262626;border-radius:2px"></div>
<div class="t" style="left:182px;top:453px;font-size:12px;color:#6a6a6a;">Z</div>
<div class="t" style="left:194px;top:453px;font-size:12px;color:#e2c77a;">32.0</div>
<div class="a" style="left:261px;top:451px;width:9px;height:16px;background:#333;border-radius:0 2px 2px 0"></div>
<svg class="a" style="left:250px;top:451px;" width="22" height="16" viewBox="0 0 22 16"><path d="M1.5 8 L4.5 5 H8 V11 H4.5Z" fill="#e8c86a"/><path d="M13 5 H16 L19 8 L16 11 H13Z" fill="#666"/></svg>
<div class="a" style="left:177px;top:479px;width:194px;height:4px;background:#4a4a4a;border-radius:2px"></div>
<div class="a" style="left:177px;top:479px;width:97px;height:4px;background:#dedede;border-radius:2px"></div>
<svg class="a" style="left:268px;top:475px;" width="12" height="12" viewBox="0 0 12 12"><circle cx="6" cy="6" r="5" fill="#74c4a8"/><circle cx="6" cy="6" r="2" fill="#5aa88c"/></svg>
<div class="a" style="left:377px;top:473px;width:94px;height:16px;background:#262626;border-radius:2px"></div>
<div class="t" style="left:382px;top:475px;font-size:12px;color:#6a6a6a;">#</div>
<div class="t" style="left:394px;top:475px;font-size:12px;color:#e6e6e6;">0.0</div>
<div class="a" style="left:177px;top:501px;width:194px;height:4px;background:#4a4a4a;border-radius:2px"></div>
<div class="a" style="left:177px;top:501px;width:97px;height:4px;background:#dedede;border-radius:2px"></div>
<svg class="a" style="left:268px;top:497px;" width="12" height="12" viewBox="0 0 12 12"><circle cx="6" cy="6" r="5" fill="#74c4a8"/><circle cx="6" cy="6" r="2" fill="#5aa88c"/></svg>
<div class="a" style="left:377px;top:495px;width:94px;height:16px;background:#262626;border-radius:2px"></div>
<div class="t" style="left:382px;top:497px;font-size:12px;color:#6a6a6a;">#</div>
<div class="t" style="left:394px;top:497px;font-size:12px;color:#e6e6e6;">0.0</div>
<div class="a" style="left:177px;top:518px;width:16px;height:16px;background:#2a2a2a;border-radius:2px"></div>
<svg class="a" style="left:177px;top:518px;" width="16" height="16" viewBox="0 0 16 16"><path d="M3.5 8.5 L6.5 11.5 L12.5 4.5" stroke="#33cc66" stroke-width="2" fill="none"/></svg>
<div class="a" style="left:177px;top:540px;width:194px;height:15px;background:#525252;border-radius:3px"></div>
<div class="t" style="left:180px;top:541px;font-size:12px;color:#ececec;">Custom...</div>
<svg class="a" style="left:357px;top:545px;" width="10" height="6" viewBox="0 0 10 6"><path d="M1 1 L5 5 L9 1" stroke="#ddd" fill="none"/></svg>
<div class="a" style="left:177px;top:561px;width:94px;height:16px;background:#262626;border-radius:2px"></div>
<div class="t" style="left:182px;top:563px;font-size:12px;color:#6a6a6a;">#</div>
<div class="t" style="left:194px;top:563px;font-size:12px;color:#e6e6e6;">1</div>
<div class="a" style="left:6px;top:580px;width:468px;height:4px;background:#2a2a2a;"></div>
<div class="a" style="left:6px;top:584px;width:468px;height:23px;background:#3a3a3a;border-left:4px solid #c3ee76;border-top:1px solid #c3ee76;border-right:3px solid #c3ee76"></div>
<svg class="a" style="left:14px;top:592px;" width="10" height="7" viewBox="0 0 10 7"><path d="M1 1 L5 5 L9 1" stroke="#aaa" fill="none" stroke-width="1.1"/></svg>
<div class="a" style="left:28px;top:587px;width:18px;height:18px;background:#2a2a2a;border-radius:3px"></div>
<svg class="a" style="left:30px;top:589px;" width="14" height="14" viewBox="0 0 14 14"><path d="M11.5 5.5 A5 5 0 1 1 9 2.6" stroke="#ddd" stroke-width="1.1" fill="none"/><path d="M4.5 6.5 L7 9 L12.5 3" stroke="#ddd" stroke-width="1.6" fill="none"/></svg>
<svg class="a" style="left:50px;top:591px;" width="10" height="10" viewBox="0 0 10 10"><circle cx="5" cy="5" r="4" stroke="#666" stroke-width="1.1" fill="none"/></svg>
<svg class="a" style="left:66px;top:587px" width="16" height="18" viewBox="0 0 16 18"><path d="M4 2 H12 L8 8Z" fill="#8d8"/><path d="M8 7 V16" stroke="#ddd" stroke-width="1.5"/><circle cx="2" cy="9" r="1" fill="#ddd"/><circle cx="14" cy="9" r="1" fill="#ddd"/></svg>
<div class="t" style="left:87px;top:590px;font-size:12px;color:#eaeaea;">Frame [Time]</div>
<div class="a" style="left:366px;top:587px;width:18px;height:18px;background:#2e2e2e;border-radius:3px;border:1px solid #222"></div>
<svg class="a" style="left:366px;top:587px;" width="18" height="18" viewBox="0 0 18 18"><rect x="2" y="5" width="5" height="2" fill="#e6e6e6"/><rect x="2" y="11" width="5" height="2" fill="#e6e6e6"/><rect x="9" y="8" width="5" height="2" fill="#e6e6e6"/><rect x="7.5" y="5" width="1" height="8" fill="#777"/><path d="M14 16 L16.5 13.5 V16Z" fill="#6cc"/></svg>
<div class="a" style="left:386px;top:587px;width:21px;height:18px;background:#2a2a2a;border-radius:3px"></div>
<div class="a" style="left:396px;top:588px;width:1px;height:16px;background:#333;"></div>
<svg class="a" style="left:386px;top:587px;" width="21" height="18" viewBox="0 0 21 18"><path d="M4 9 L6 6.5 H9 V11.5 H6Z" fill="#e2c87a"/><path d="M12 6.5 H15 L17 9 L15 11.5 H12Z" fill="#d65ae8"/></svg>
<div class="a" style="left:410px;top:587px;width:18px;height:18px;background:#2e2e2e;border-radius:3px;border:1px solid #222"></div>
<svg class="a" style="left:413px;top:589px;" width="12" height="14" viewBox="0 0 12 14"><path d="M3 1 H9 L8 6 L10 8 H2 L4 6Z M6 8 V13" fill="#ddd" stroke="#ddd" stroke-width="1.2"/></svg>
<div class="a" style="left:430px;top:587px;width:18px;height:18px;background:#2e2e2e;border-radius:3px;border:1px solid #222"></div>
<svg class="a" style="left:432px;top:589px;" width="14" height="14" viewBox="0 0 14 14"><circle cx="3" cy="3" r="1" fill="#ddd"/><circle cx="8" cy="2" r="1" fill="#ddd"/><circle cx="3" cy="8" r="1" fill="#ddd"/><path d="M9 5 V13 M5 9 H13" stroke="#eee" stroke-width="1.5"/></svg>
<div class="a" style="left:451px;top:587px;width:18px;height:18px;background:#2e2e2e;border-radius:3px;border:1px solid #222"></div>
<svg class="a" style="left:454px;top:590px;" width="12" height="12" viewBox="0 0 12 12"><path d="M1 1 L11 11 M11 1 L1 11" stroke="#ddd" stroke-width="1.2"/></svg>
<div class="a" style="left:6px;top:607px;width:468px;height:22px;background:#2a2a2a;"></div>
<div class="a" style="left:243px;top:609px;width:115px;height:20px;background:#454545;border-radius:4px 4px 0 0"></div>
<div class="t" style="left:274px;top:612px;font-size:12px;color:#e6e6e6;">Behaviour</div>
<div class="t" style="left:396px;top:612px;font-size:12px;color:#c8c8c8;">Falloffs</div>
<div class="a" style="left:6px;top:629px;width:468px;height:176px;background:#3a3a3a;border-radius:0 0 3px 3px"></div>
<svg class="a" style="left:14px;top:635px;" width="10" height="10" viewBox="0 0 10 10"><circle cx="5" cy="5" r="4" stroke="#777" stroke-width="1.1" fill="none"/></svg>
<div class="t" style="left:30px;top:634px;font-size:12px;color:#e2e2e2;">Strength</div>
<svg class="a" style="left:14px;top:657px;" width="10" height="10" viewBox="0 0 10 10"><circle cx="5" cy="5" r="4" stroke="#777" stroke-width="1.1" fill="none"/></svg>
<div class="t" style="left:30px;top:656px;font-size:12px;color:#e2e2e2;">Value</div>
<svg class="a" style="left:14px;top:679px;" width="10" height="10" viewBox="0 0 10 10"><circle cx="5" cy="5" r="4" stroke="#777" stroke-width="1.1" fill="none"/></svg>
<div class="t" style="left:30px;top:678px;font-size:12px;color:#e2e2e2;">Interpolation Mode</div>
<svg class="a" style="left:14px;top:701px;" width="10" height="10" viewBox="0 0 10 10"><circle cx="5" cy="5" r="4" stroke="#777" stroke-width="1.1" fill="none"/></svg>
<div class="t" style="left:30px;top:700px;font-size:12px;color:#9a9a9a;">Cycle Length</div>
<div class="t" style="left:30px;top:722px;font-size:12px;color:#9a9a9a;">Graph</div>
<svg class="a" style="left:14px;top:745px;" width="10" height="10" viewBox="0 0 10 10"><circle cx="5" cy="5" r="4" stroke="#777" stroke-width="1.1" fill="none"/></svg>
<div class="t" style="left:30px;top:744px;font-size:12px;color:#e2e2e2;">Offset</div>
<svg class="a" style="left:14px;top:767px;" width="10" height="10" viewBox="0 0 10 10"><circle cx="5" cy="5" r="4" stroke="#777" stroke-width="1.1" fill="none"/></svg>
<div class="t" style="left:30px;top:766px;font-size:12px;color:#e2e2e2;">Start Frame</div>
<svg class="a" style="left:14px;top:789px;" width="10" height="10" viewBox="0 0 10 10"><circle cx="5" cy="5" r="4" stroke="#777" stroke-width="1.1" fill="none"/></svg>
<div class="t" style="left:30px;top:788px;font-size:12px;color:#e2e2e2;">Time</div>
<div class="a" style="left:177px;top:632px;width:94px;height:16px;background:#262626;border-radius:2px"></div>
<div class="t" style="left:182px;top:635px;font-size:10px;color:#6a6a6a;">%</div>
<div class="t" style="left:194px;top:634px;font-size:12px;color:#e6e6e6;">20.0</div>
<div class="a" style="left:177px;top:654px;width:94px;height:16px;background:#262626;border-radius:2px"></div>
<div class="t" style="left:182px;top:656px;font-size:12px;color:#6a6a6a;">#</div>
<div class="t" style="left:194px;top:656px;font-size:12px;color:#e6e6e6;">1.0</div>
<div class="a" style="left:177px;top:677px;width:194px;height:15px;background:#525252;border-radius:3px"></div>
<div class="t" style="left:180px;top:678px;font-size:12px;color:#ececec;">Frame</div>
<svg class="a" style="left:357px;top:682px;" width="10" height="6" viewBox="0 0 10 6"><path d="M1 1 L5 5 L9 1" stroke="#ddd" fill="none"/></svg>
<div class="a" style="left:177px;top:698px;width:94px;height:16px;background:#262626;border-radius:2px"></div>
<div class="t" style="left:182px;top:700px;font-size:12px;color:#555;">S</div>
<div class="t" style="left:194px;top:700px;font-size:12px;color:#999;">1.0</div>
<div class="a" style="left:178px;top:721px;width:16px;height:16px;background:#333;border-radius:2px;border:1px solid #2a2a2a"></div>
<svg class="a" style="left:179px;top:722px;" width="14" height="14" viewBox="0 0 14 14"><path d="M2 2 V12 H12" stroke="#ccc" fill="none"/><path d="M3 11 L11 4" stroke="#ccc"/></svg>
<div class="a" style="left:177px;top:742px;width:94px;height:16px;background:#262626;border-radius:2px"></div>
<div class="t" style="left:182px;top:744px;font-size:12px;color:#6a6a6a;">#</div>
<div class="t" style="left:194px;top:744px;font-size:12px;color:#e6e6e6;">0.0</div>
<div class="a" style="left:177px;top:764px;width:94px;height:16px;background:#262626;border-radius:2px"></div>
<div class="t" style="left:182px;top:766px;font-size:12px;color:#6a6a6a;">#</div>
<div class="t" style="left:194px;top:766px;font-size:12px;color:#e6e6e6;">0</div>
<div class="a" style="left:177px;top:786px;width:84px;height:16px;background:#262626;border-radius:2px"></div>
<div class="t" style="left:182px;top:788px;font-size:12px;color:#6a6a6a;">#</div>
<div class="t" style="left:194px;top:788px;font-size:12px;color:#e2c77a;">26.0</div>
<div class="a" style="left:261px;top:786px;width:9px;height:16px;background:#333;border-radius:0 2px 2px 0"></div>
<svg class="a" style="left:250px;top:786px;" width="22" height="16" viewBox="0 0 22 16"><path d="M1.5 8 L4.5 5 H8 V11 H4.5Z" fill="#e8c86a"/><path d="M13 5 H16 L19 8 L16 11 H13Z" fill="#666"/></svg>
<div class="a" style="left:273px;top:786px;width:15px;height:16px;background:#2e2e2e;border-radius:3px;border:1px solid #222"></div>
<svg class="a" style="left:276px;top:789px;" width="10" height="10" viewBox="0 0 10 10"><path d="M1 1 L9 9 M9 1 L1 9" stroke="#ddd" stroke-width="1.1"/></svg>
<div class="a" style="left:494px;top:85px;width:30px;height:495px;background:#444;"></div>
<div class="a" style="left:503px;top:89px;width:2px;height:2px;background:#888;"></div>
<div class="a" style="left:508px;top:89px;width:2px;height:2px;background:#888;"></div>
<div class="a" style="left:513px;top:89px;width:2px;height:2px;background:#888;"></div>
<div class="a" style="left:495px;top:96px;width:28px;height:28px;background:#151515;border-radius:5px"></div>
<svg class="a" style="left:500px;top:101px;" width="18" height="18" viewBox="0 0 18 18"><defs><linearGradient id="tg" x1="0" y1="0" x2="0" y2="1"><stop offset="0" stop-color="#f2f2f2"/><stop offset="1" stop-color="#b8b8b8"/></linearGradient></defs><path d="M4 2 L15 11 L10 11.5 L12.5 16 L10.5 17 L8 12.5 L4 15.5Z" fill="none" stroke="#33cc66" stroke-width="1.1"/></svg>
<svg class="a" style="left:499px;top:130px;" width="20" height="20" viewBox="0 0 20 20"><defs><linearGradient id="tg" x1="0" y1="0" x2="0" y2="1"><stop offset="0" stop-color="#f2f2f2"/><stop offset="1" stop-color="#b8b8b8"/></linearGradient></defs><path d="M4 0 L18 13.5 H10.5 L4 19.8Z" fill="#e6e6e6"/></svg>
<svg class="a" style="left:500px;top:161px;" width="18" height="18" viewBox="0 0 18 18"><defs><linearGradient id="tg" x1="0" y1="0" x2="0" y2="1"><stop offset="0" stop-color="#f2f2f2"/><stop offset="1" stop-color="#b8b8b8"/></linearGradient></defs><g transform="rotate(-45 9 9)"><path d="M9 -1 L14 8 L12.5 12 H5.5 L4 8 Z" fill="url(#tg)"/><rect x="5" y="12.5" width="8" height="4" rx="1" fill="url(#tg)"/><circle cx="9" cy="7" r="1.3" fill="#444"/><path d="M9 -1 V6" stroke="#555" stroke-width="0.8"/></g></svg>
<svg class="a" style="left:500px;top:190px;" width="18" height="18" viewBox="0 0 18 18"><defs><linearGradient id="tg" x1="0" y1="0" x2="0" y2="1"><stop offset="0" stop-color="#f2f2f2"/><stop offset="1" stop-color="#b8b8b8"/></linearGradient></defs><path d="M3 16 L4 12 L13 3 L16 6 L7 15Z" fill="url(#tg)"/><path d="M3 16 L4 13.5 L5.5 15Z" fill="#333"/></svg>
<svg class="a" style="left:500px;top:220px;" width="18" height="18" viewBox="0 0 18 18"><defs><linearGradient id="tg" x1="0" y1="0" x2="0" y2="1"><stop offset="0" stop-color="#f2f2f2"/><stop offset="1" stop-color="#b8b8b8"/></linearGradient></defs><rect x="1" y="6" width="11" height="9" rx="1.5" fill="url(#tg)"/><path d="M12 9 L17 6 V15 L12 12Z" fill="url(#tg)"/><rect x="3" y="3.5" width="6" height="1.3" fill="#ddd"/><circle cx="4" cy="9" r="1.1" fill="#444"/></svg>
<svg class="a" style="left:500px;top:250px;" width="18" height="18" viewBox="0 0 18 18"><defs><linearGradient id="tg" x1="0" y1="0" x2="0" y2="1"><stop offset="0" stop-color="#f2f2f2"/><stop offset="1" stop-color="#b8b8b8"/></linearGradient></defs><path d="M2 16 L16 3" stroke="#ddd" stroke-width="1.2"/></svg>
<svg class="a" style="left:500px;top:281px;" width="18" height="18" viewBox="0 0 18 18"><defs><linearGradient id="tg" x1="0" y1="0" x2="0" y2="1"><stop offset="0" stop-color="#f2f2f2"/><stop offset="1" stop-color="#b8b8b8"/></linearGradient></defs><path d="M2 2 H16 V6 H11 V17 H7 V6 H2Z" fill="url(#tg)"/></svg>
<svg class="a" style="left:500px;top:311px;" width="18" height="18" viewBox="0 0 18 18"><defs><linearGradient id="tg" x1="0" y1="0" x2="0" y2="1"><stop offset="0" stop-color="#f2f2f2"/><stop offset="1" stop-color="#b8b8b8"/></linearGradient></defs><path d="M3 2 L10 7 L6.5 8 L4.5 12Z" fill="#ddd"/><path d="M10 2 H14 L16 16 H2 L2 10" fill="none" stroke="#ddd" stroke-width="1" stroke-dasharray="2 2"/></svg>
<svg class="a" style="left:500px;top:341px;" width="18" height="18" viewBox="0 0 18 18"><defs><linearGradient id="tg" x1="0" y1="0" x2="0" y2="1"><stop offset="0" stop-color="#f2f2f2"/><stop offset="1" stop-color="#b8b8b8"/></linearGradient></defs><rect x="2" y="2" width="14" height="14" fill="url(#tg)"/></svg>
<svg class="a" style="left:500px;top:371px;" width="18" height="18" viewBox="0 0 18 18"><defs><linearGradient id="tg" x1="0" y1="0" x2="0" y2="1"><stop offset="0" stop-color="#f2f2f2"/><stop offset="1" stop-color="#b8b8b8"/></linearGradient></defs><circle cx="9" cy="9" r="8" fill="url(#tg)"/></svg>
<svg class="a" style="left:500px;top:400px;" width="18" height="18" viewBox="0 0 18 18"><defs><linearGradient id="tg" x1="0" y1="0" x2="0" y2="1"><stop offset="0" stop-color="#f2f2f2"/><stop offset="1" stop-color="#b8b8b8"/></linearGradient></defs><path d="M9 1 L17 7 L14 16 H4 L1 7Z" fill="url(#tg)"/></svg>
<svg class="a" style="left:500px;top:430px;" width="18" height="18" viewBox="0 0 18 18"><defs><linearGradient id="tg" x1="0" y1="0" x2="0" y2="1"><stop offset="0" stop-color="#f2f2f2"/><stop offset="1" stop-color="#b8b8b8"/></linearGradient></defs><path d="M9 1 L11.3 6.5 L17 7 L12.6 10.8 L14 16.5 L9 13.5 L4 16.5 L5.4 10.8 L1 7 L6.7 6.5Z" fill="url(#tg)"/></svg>
<svg class="a" style="left:500px;top:460px;" width="18" height="18" viewBox="0 0 18 18"><defs><linearGradient id="tg" x1="0" y1="0" x2="0" y2="1"><stop offset="0" stop-color="#f2f2f2"/><stop offset="1" stop-color="#b8b8b8"/></linearGradient></defs><path d="M15.5 8 A7 7 0 1 0 7 16" stroke="url(#tg)" stroke-width="3.5" fill="none"/></svg>
<svg class="a" style="left:500px;top:490px;" width="18" height="18" viewBox="0 0 18 18"><defs><linearGradient id="tg" x1="0" y1="0" x2="0" y2="1"><stop offset="0" stop-color="#f2f2f2"/><stop offset="1" stop-color="#b8b8b8"/></linearGradient></defs><path d="M9 1 Q10 8 17 9 Q10 10 9 17 Q8 10 1 9 Q8 8 9 1Z" fill="url(#tg)"/></svg>
<svg class="a" style="left:500px;top:520px;" width="18" height="18" viewBox="0 0 18 18"><defs><linearGradient id="tg" x1="0" y1="0" x2="0" y2="1"><stop offset="0" stop-color="#f2f2f2"/><stop offset="1" stop-color="#b8b8b8"/></linearGradient></defs><g fill="url(#tg)"><circle cx="9" cy="9" r="5.5"/><rect x="7.3" y="0.5" width="3.4" height="4" transform="rotate(0 9 9)"/><rect x="7.3" y="0.5" width="3.4" height="4" transform="rotate(45 9 9)"/><rect x="7.3" y="0.5" width="3.4" height="4" transform="rotate(90 9 9)"/><rect x="7.3" y="0.5" width="3.4" height="4" transform="rotate(135 9 9)"/><rect x="7.3" y="0.5" width="3.4" height="4" transform="rotate(180 9 9)"/><rect x="7.3" y="0.5" width="3.4" height="4" transform="rotate(225 9 9)"/><rect x="7.3" y="0.5" width="3.4" height="4" transform="rotate(270 9 9)"/><rect x="7.3" y="0.5" width="3.4" height="4" transform="rotate(315 9 9)"/></g><circle cx="9" cy="9" r="2.5" fill="#444"/></svg>
<svg class="a" style="left:500px;top:561px;" width="18" height="18" viewBox="0 0 18 18"><defs><linearGradient id="tg" x1="0" y1="0" x2="0" y2="1"><stop offset="0" stop-color="#f2f2f2"/><stop offset="1" stop-color="#b8b8b8"/></linearGradient></defs><path d="M3 4 L8 9 L3 14 M9 4 L14 9 L9 14" stroke="#aaa" stroke-width="1.2" fill="none"/></svg>
<div class="a" style="left:530px;top:85px;width:1057px;height:22px;background:#1f1f1f;"></div>
<div class="a" style="left:530px;top:85px;width:1057px;height:1px;background:#c9b35c;"></div>
<div class="a" style="left:530px;top:86px;width:87px;height:21px;background:#454545;"></div>
<div class="t" style="left:535px;top:90px;font-size:12px;color:#e6e6e6;">Composition 4</div>
<div class="a" style="left:530px;top:107px;width:1057px;height:451px;background:#000;"></div>
<svg class="a" style="left:693px;top:127px;" width="730" height="410" viewBox="0 0 730 410"><rect x="0" y="0" width="730" height="410" fill="#00aeff"/><circle cx="282.4" cy="213.8" r="22.6" fill="#55a0ff"/><text x="282.4" y="219.0" font-size="14.5" fill="#fff" stroke="#fff" stroke-width="0.22" text-anchor="middle" font-family="Liberation Sans">3</text><circle cx="254.8" cy="242.8" r="25" fill="#ff7452"/><text x="254.8" y="248.6" font-size="16.0" fill="#fff" stroke="#fff" stroke-width="0.24" text-anchor="middle" font-family="Liberation Sans">14</text><circle cx="237.5" cy="270.6" r="29.5" fill="#55a0ff"/><circle cx="246.3" cy="291.7" r="37.4" fill="#55ffb4"/><text x="246.3" y="300.3" font-size="23.9" fill="#fff" stroke="#fff" stroke-width="0.36" text-anchor="middle" font-family="Liberation Sans">6</text><circle cx="292.5" cy="290.0" r="44.7" fill="#55ffb4"/><text x="292.5" y="300.3" font-size="28.6" fill="#fff" stroke="#fff" stroke-width="0.43" text-anchor="middle" font-family="Liberation Sans">2</text><circle cx="316.4" cy="186.0" r="20.7" fill="#b3e88f"/><text x="316.4" y="190.8" font-size="13.2" fill="#fff" stroke="#fff" stroke-width="0.20" text-anchor="middle" font-family="Liberation Sans">7</text><circle cx="353.9" cy="160.0" r="20.1" fill="#ffd152"/><text x="353.9" y="164.6" font-size="12.9" fill="#fff" stroke="#fff" stroke-width="0.19" text-anchor="middle" font-family="Liberation Sans">11</text><circle cx="393.3" cy="137.0" r="20.3" fill="#55a0ff"/><text x="393.3" y="141.7" font-size="13.0" fill="#fff" stroke="#fff" stroke-width="0.19" text-anchor="middle" font-family="Liberation Sans">0</text><circle cx="434.0" cy="117.0" r="21.8" fill="#ff4fbb"/><text x="434.0" y="122.0" font-size="14.0" fill="#fff" stroke="#fff" stroke-width="0.21" text-anchor="middle" font-family="Liberation Sans">4</text><circle cx="474.9" cy="102.2" r="24.8" fill="#ffd152"/><text x="474.9" y="107.9" font-size="15.9" fill="#fff" stroke="#fff" stroke-width="0.24" text-anchor="middle" font-family="Liberation Sans">8</text><circle cx="511.5" cy="96.7" r="30" fill="#d47ed4"/><circle cx="533.9" cy="104.9" r="35.5" fill="#4169e0"/><circle cx="526.5" cy="136.8" r="42.8" fill="#d47ed4"/><text x="526.5" y="146.7" font-size="27.4" fill="#fff" stroke="#fff" stroke-width="0.41" text-anchor="middle" font-family="Liberation Sans">5</text><circle cx="471.5" cy="193.2" r="48.6" fill="#6755ff"/><text x="471.5" y="204.4" font-size="31.1" fill="#fff" stroke="#fff" stroke-width="0.47" text-anchor="middle" font-family="Liberation Sans">9</text><circle cx="378.6" cy="254.2" r="49.7" fill="#ff7452"/><text x="378.6" y="265.7" font-size="31.8" fill="#fff" stroke="#fff" stroke-width="0.48" text-anchor="middle" font-family="Liberation Sans">13</text><polygon points="527.7,27.4 613.9,165.7 261.1,386.2 174.9,248.0" fill="none" stroke="#3cc47e" stroke-width="1.2"/><rect x="524.7" y="24.4" width="6" height="6" fill="#fff" stroke="#3dbf7c" stroke-width="1" transform="rotate(32 527.7 27.4)"/><rect x="610.9" y="162.7" width="6" height="6" fill="#fff" stroke="#3dbf7c" stroke-width="1" transform="rotate(32 613.9 165.7)"/><rect x="258.1" y="383.2" width="6" height="6" fill="#fff" stroke="#3dbf7c" stroke-width="1" transform="rotate(32 261.1 386.2)"/><rect x="171.9" y="245.0" width="6" height="6" fill="#fff" stroke="#3dbf7c" stroke-width="1" transform="rotate(32 174.9 248.0)"/><rect x="174.9" y="232" width="9" height="9" fill="#ffe070"/><text x="187.5" y="241.5" font-size="12" fill="#000" font-family="Liberation Sans">Duplicator</text><circle cx="322" cy="106" r="4.2" fill="none" stroke="#333" stroke-width="1.1"/><circle cx="322" cy="106" r="1.2" fill="#333"/><polygon points="496.5,288.0 519.0,316.0 509.0,316.0 509.0,346.0 484.5,346.0 484.5,316.0 474.5,316.0" fill="none" stroke="#c6f02f" stroke-width="3" stroke-linejoin="miter"/></svg>
<div class="t" style="left:569px;top:461px;font-size:12px;color:#fff">Hold S <span style="color:rgba(110,110,130,0.75)">Direct Layer Selection</span></div>
<div class="t" style="left:569px;top:475px;font-size:12px;color:#fff">Space <span style="color:rgba(110,110,130,0.75)">Play/ Stop</span></div>
<div class="t" style="left:569px;top:489px;font-size:12px;color:#fff">Space + click + drag <span style="color:rgba(110,110,130,0.75)">Pan</span></div>
<div class="t" style="left:569px;top:503px;font-size:12px;color:#fff">Alt + click + drag <span style="color:rgba(110,110,130,0.75)">Move Pivot Point</span></div>
<div class="t" style="left:569px;top:517px;font-size:12px;color:#fff">Shift <span style="color:rgba(110,110,130,0.75)">Enable Snapping</span></div>
<div class="t" style="left:998px;top:537px;font-size:12px;color:#fff;">Viewport Quality: High</div>
<div class="a" style="left:530px;top:558px;width:1057px;height:22px;background:#474747;"></div>
<div class="a" style="left:535px;top:561px;width:77px;height:16px;background:#2a2a2a;border-radius:3px"></div>
<div class="t" style="left:539px;top:563px;font-size:12px;color:#e6e6e6;">38%</div>
<svg class="a" style="left:598px;top:566px;" width="10" height="6" viewBox="0 0 10 6"><path d="M1 1 L5 5 L9 1" stroke="#ccc" fill="none"/></svg>
<div class="a" style="left:866px;top:560px;width:20px;height:19px;background:#2f2f2f;border-radius:3px;border:1px solid #252525"></div>
<div class="a" style="left:886px;top:560px;width:20px;height:19px;background:#2f2f2f;border-radius:3px;border:1px solid #252525"></div>
<div class="a" style="left:906px;top:560px;width:20px;height:19px;background:#2f2f2f;border-radius:3px;border:1px solid #252525"></div>
<div class="a" style="left:926px;top:560px;width:20px;height:19px;background:#2f2f2f;border-radius:3px;border:1px solid #252525"></div>
<div class="a" style="left:946px;top:560px;width:20px;height:19px;background:#2f2f2f;border-radius:3px;border:1px solid #252525"></div>
<svg class="a" style="left:866px;top:560px;" width="100" height="19" viewBox="0 0 100 19"><rect x="4" y="5" width="2" height="9" fill="#d0d0d0"/><path d="M15 5 V14 L7 9.5Z" fill="#d0d0d0"/><path d="M32 5 V14 L24 9.5Z" fill="#d0d0d0"/><rect x="33" y="5" width="2" height="9" fill="#d0d0d0"/><path d="M45 5 V14 L52 9.5Z" fill="#d0d0d0"/><rect x="64" y="5" width="2" height="9" fill="#d0d0d0"/><path d="M67 5 V14 L74 9.5Z" fill="#d0d0d0"/><path d="M85 5 V14 L92 9.5Z" fill="#d0d0d0"/><rect x="93" y="5" width="2" height="9" fill="#d0d0d0"/></svg>
<div class="a" style="left:971px;top:560px;width:20px;height:19px;background:#2f2f2f;border-radius:3px;border:1px solid #252525"></div>
<svg class="a" style="left:971px;top:560px;" width="20" height="19" viewBox="0 0 20 19"><path d="M7 7 H4 V13 H15 V10" stroke="#d0d0d0" stroke-width="1.3" fill="none"/><path d="M11 3 V10 L16 6.5Z" fill="#d0d0d0"/></svg>
<div class="a" style="left:1232px;top:560px;width:37px;height:18px;background:#383838;border-radius:3px"></div>
<svg class="a" style="left:1234px;top:563px;" width="14" height="12" viewBox="0 0 14 12"><path d="M1 6 L5 2 H13 V10 H5Z" fill="#ddd"/><circle cx="5" cy="6" r="1.3" fill="#333"/></svg>
<div class="t" style="left:1257px;top:563px;font-size:12px;color:#9ab;">0</div>
<div class="a" style="left:1272px;top:560px;width:31px;height:19px;background:#2f2f2f;border-radius:4px;border:1px solid #252525"></div>
<div class="a" style="left:1291px;top:562px;width:1px;height:15px;background:#3a3a3a;"></div>
<svg class="a" style="left:1295px;top:564px;" width="10" height="10" viewBox="0 0 10 10"><path d="M2.5 2.5 L7.5 5 L2.5 7.5Z" fill="none" stroke="#999" stroke-width="1"/></svg>
<svg class="a" style="left:1275px;top:562px;" width="16" height="15" viewBox="0 0 16 15"><path d="M1 5 H4 L8 2 V13 L4 10 H1Z" fill="#33cc66"/><path d="M10 4 Q12 7.5 10 11 M12 2.5 Q15 7.5 12 12.5" stroke="#33cc66" stroke-width="1.3" fill="none"/></svg>
<div class="a" style="left:1307px;top:560px;width:31px;height:19px;background:#2f2f2f;border-radius:4px;border:1px solid #252525"></div>
<div class="a" style="left:1308px;top:561px;width:18px;height:17px;background:#3f3f3f;border-radius:3px 0 0 3px"></div>
<div class="a" style="left:1326px;top:562px;width:1px;height:15px;background:#3a3a3a;"></div>
<svg class="a" style="left:1330px;top:564px;" width="10" height="10" viewBox="0 0 10 10"><path d="M2.5 2.5 L7.5 5 L2.5 7.5Z" fill="none" stroke="#999" stroke-width="1"/></svg>
<svg class="a" style="left:1310px;top:562px;" width="15" height="15" viewBox="0 0 15 15"><path d="M12 9 A5 5 0 1 0 3 5 L5 11" stroke="#ddd" stroke-width="2" fill="none" transform="rotate(20 7.5 7.5)"/></svg>
<div class="a" style="left:1342px;top:560px;width:31px;height:19px;background:#2f2f2f;border-radius:4px;border:1px solid #252525"></div>
<div class="a" style="left:1343px;top:561px;width:18px;height:17px;background:#3f3f3f;border-radius:3px 0 0 3px"></div>
<div class="a" style="left:1361px;top:562px;width:1px;height:15px;background:#3a3a3a;"></div>
<svg class="a" style="left:1365px;top:564px;" width="10" height="10" viewBox="0 0 10 10"><path d="M2.5 2.5 L7.5 5 L2.5 7.5Z" fill="none" stroke="#999" stroke-width="1"/></svg>
<svg class="a" style="left:1344px;top:562px;" width="16" height="15" viewBox="0 0 16 15"><path d="M5 1 V14 M10 1 V14 M1 5 H14 M1 10 H14" stroke="#ddd" stroke-width="1.2"/></svg>
<div class="a" style="left:1377px;top:560px;width:20px;height:19px;background:#2f2f2f;border-radius:4px;border:1px solid #252525"></div>
<svg class="a" style="left:1379px;top:562px;" width="16" height="15" viewBox="0 0 16 15"><rect x="1" y="2" width="3" height="3" fill="#33cc66"/><rect x="1" y="6" width="3" height="4" fill="#33cc66"/><rect x="5" y="2" width="10" height="6" fill="none" stroke="#33cc66" stroke-width="1.3"/><rect x="1" y="10" width="14" height="3" fill="#33cc66"/></svg>
<div class="a" style="left:1400px;top:560px;width:20px;height:19px;background:#2f2f2f;border-radius:4px;border:1px solid #252525"></div>
<svg class="a" style="left:1402px;top:562px;" width="16" height="15" viewBox="0 0 16 15"><path d="M2 3 L6 7.5 L2 12Z M6 3 L10 7.5 L6 12 M10 3 L14 7.5 L10 12" stroke="#ccc" stroke-width="1.6" fill="#ccc"/></svg>
<div class="a" style="left:1423px;top:560px;width:31px;height:19px;background:#2f2f2f;border-radius:4px;border:1px solid #252525"></div>
<div class="a" style="left:1424px;top:561px;width:18px;height:17px;background:#3f3f3f;border-radius:3px 0 0 3px"></div>
<div class="a" style="left:1442px;top:562px;width:1px;height:15px;background:#3a3a3a;"></div>
<svg class="a" style="left:1446px;top:564px;" width="10" height="10" viewBox="0 0 10 10"><path d="M2.5 2.5 L7.5 5 L2.5 7.5Z" fill="none" stroke="#999" stroke-width="1"/></svg>
<svg class="a" style="left:1425px;top:562px;" width="16" height="15" viewBox="0 0 16 15"><rect x="2" y="2.5" width="12" height="10" fill="none" stroke="#ddd" stroke-width="1.2"/><rect x="2" y="11" width="12" height="2" fill="#ddd"/></svg>
<div class="a" style="left:1458px;top:560px;width:31px;height:19px;background:#2f2f2f;border-radius:4px;border:1px solid #252525"></div>
<div class="a" style="left:1459px;top:561px;width:18px;height:17px;background:#3f3f3f;border-radius:3px 0 0 3px"></div>
<div class="a" style="left:1477px;top:562px;width:1px;height:15px;background:#3a3a3a;"></div>
<svg class="a" style="left:1481px;top:564px;" width="10" height="10" viewBox="0 0 10 10"><path d="M2.5 2.5 L7.5 5 L2.5 7.5Z" fill="none" stroke="#999" stroke-width="1"/></svg>
<svg class="a" style="left:1460px;top:562px;" width="16" height="15" viewBox="0 0 16 15"><rect x="2" y="2" width="7" height="5" fill="none" stroke="#ddd"/><path d="M10 5 V9 H3 M12 7 V11 H5 M14 9 V13 H7" stroke="#bbb" fill="none"/></svg>
<div class="a" style="left:1493px;top:560px;width:31px;height:19px;background:#2f2f2f;border-radius:4px;border:1px solid #252525"></div>
<div class="a" style="left:1494px;top:561px;width:17px;height:17px;background:#3f3f3f;border-radius:3px 0 0 3px"></div>
<div class="a" style="left:1511px;top:562px;width:1px;height:15px;background:#3a3a3a;"></div>
<svg class="a" style="left:1515px;top:564px;" width="10" height="10" viewBox="0 0 10 10"><path d="M2.5 2.5 L7.5 5 L2.5 7.5Z" fill="none" stroke="#999" stroke-width="1"/></svg>
<svg class="a" style="left:1495px;top:562px;" width="16" height="15" viewBox="0 0 16 15"><rect x="1.5" y="2" width="8" height="8" fill="#ddd"/><rect x="5.5" y="6" width="8" height="8" fill="#3f3f3f" stroke="#ddd" stroke-width="1.2"/></svg>
<div class="a" style="left:1528px;top:560px;width:31px;height:19px;background:#2f2f2f;border-radius:4px;border:1px solid #252525"></div>
<div class="a" style="left:1547px;top:562px;width:1px;height:15px;background:#3a3a3a;"></div>
<svg class="a" style="left:1551px;top:564px;" width="10" height="10" viewBox="0 0 10 10"><path d="M2.5 2.5 L7.5 5 L2.5 7.5Z" fill="none" stroke="#999" stroke-width="1"/></svg>
<svg class="a" style="left:1530px;top:562px;" width="16" height="15" viewBox="0 0 16 15"><rect x="2" y="2" width="3" height="3" fill="#33cc66"/><rect x="2" y="8" width="3" height="3" fill="#33cc66"/><rect x="5" y="5" width="3" height="3" fill="#33cc66"/><rect x="5" y="11" width="3" height="3" fill="#33cc66"/><rect x="8" y="2" width="3" height="3" fill="#33cc66"/><rect x="8" y="8" width="3" height="3" fill="#33cc66"/><rect x="11" y="5" width="3" height="3" fill="#33cc66"/><rect x="11" y="11" width="3" height="3" fill="#33cc66"/></svg>
<div class="a" style="left:1563px;top:560px;width:20px;height:19px;background:#2f2f2f;border-radius:4px;border:1px solid #252525"></div>
<svg class="a" style="left:1565px;top:562px;" width="16" height="15" viewBox="0 0 16 15"><g fill="#ddd"><circle cx="8" cy="7.5" r="4.5"/><rect x="6.7" y="0.5" width="2.6" height="3.5" transform="rotate(0 8 7.5)"/><rect x="6.7" y="0.5" width="2.6" height="3.5" transform="rotate(45 8 7.5)"/><rect x="6.7" y="0.5" width="2.6" height="3.5" transform="rotate(90 8 7.5)"/><rect x="6.7" y="0.5" width="2.6" height="3.5" transform="rotate(135 8 7.5)"/><rect x="6.7" y="0.5" width="2.6" height="3.5" transform="rotate(180 8 7.5)"/><rect x="6.7" y="0.5" width="2.6" height="3.5" transform="rotate(225 8 7.5)"/><rect x="6.7" y="0.5" width="2.6" height="3.5" transform="rotate(270 8 7.5)"/><rect x="6.7" y="0.5" width="2.6" height="3.5" transform="rotate(315 8 7.5)"/></g><circle cx="8" cy="7.5" r="2" fill="#2f2f2f"/></svg>
<div class="a" style="left:530px;top:580px;width:1057px;height:6px;background:#151515;"></div>
<div class="a" style="left:1593px;top:85px;width:321px;height:22px;background:#1c1c1c;"></div>
<div class="a" style="left:1593px;top:85px;width:40px;height:22px;background:#454545;border-radius:4px 4px 0 0"></div>
<div class="t" style="left:1598px;top:90px;font-size:12px;color:#e6e6e6;">Color</div>
<div class="t" style="left:1639px;top:90px;font-size:12px;color:#e6e6e6;">Add Layers</div>
<div class="a" style="left:1633px;top:86px;width:70px;height:21px;background:#242424;border-radius:4px 4px 0 0"></div>
<div class="t" style="left:1639px;top:90px;font-size:12px;color:#e6e6e6;">Add Layers</div>
<div class="a" style="left:1593px;top:107px;width:307px;height:378px;background:#444;"></div>
<div class="a" style="left:1900px;top:107px;width:14px;height:378px;background:#2a2a2a;"></div>
<div class="a" style="left:1902px;top:153px;width:9px;height:302px;background:#4a4a4a;border-radius:5px"></div>
<div class="a" style="left:1593px;top:107px;width:307px;height:165px;overflow:hidden"><div class="a" style="left:53.1px;top:-47.1px;width:199.6px;height:199.6px;border-radius:50%;background:conic-gradient(hsl(90,100%,50%) 0deg,hsl(75,100%,50%) 15deg,hsl(60,100%,50%) 30deg,hsl(45,100%,50%) 45deg,hsl(30,100%,50%) 60deg,hsl(15,100%,50%) 75deg,hsl(0,100%,50%) 90deg,hsl(345,100%,50%) 105deg,hsl(330,100%,50%) 120deg,hsl(315,100%,50%) 135deg,hsl(300,100%,50%) 150deg,hsl(285,100%,50%) 165deg,hsl(270,100%,50%) 180deg,hsl(255,100%,50%) 195deg,hsl(240,100%,50%) 210deg,hsl(225,100%,50%) 225deg,hsl(210,100%,50%) 240deg,hsl(195,100%,50%) 255deg,hsl(180,100%,50%) 270deg,hsl(165,100%,50%) 285deg,hsl(150,100%,50%) 300deg,hsl(135,100%,50%) 315deg,hsl(120,100%,50%) 330deg,hsl(105,100%,50%) 345deg,hsl(90,100%,50%) 360deg)"></div><div class="a" style="left:78.1px;top:-22.1px;width:149.6px;height:149.6px;border-radius:50%;background:#444"></div></div>
<div class="a" style="left:1702px;top:116px;width:90px;height:90px;background:linear-gradient(to right,#000,rgba(0,0,0,0)),linear-gradient(to bottom,#fff,hsl(247,100%,50%))"></div>
<svg class="a" style="left:1785px;top:169px;" width="14" height="14" viewBox="0 0 14 14"><circle cx="7" cy="7" r="5.5" fill="none" stroke="#fff" stroke-width="1.2"/></svg>
<svg class="a" style="left:1704px;top:233px;" width="14" height="14" viewBox="0 0 14 14"><circle cx="7" cy="7" r="5.5" fill="none" stroke="#fff" stroke-width="1.2"/></svg>
<div class="a" style="left:1600px;top:273px;width:22px;height:22px;background:#6755ff;border-radius:3px"></div>
<div class="t" style="left:1625px;top:278px;font-size:12px;color:#e6e6e6;">Medium Slateblue</div>
<div class="a" style="left:1871px;top:273px;width:22px;height:22px;background:#2e2e2e;border-radius:3px;border:1px solid #252525"></div>
<svg class="a" style="left:1875px;top:277px;" width="14" height="14" viewBox="0 0 14 14"><path d="M8.5 3 L10 1.5 a1.8 1.8 0 0 1 2.5 2.5 L11 5.5 Z" fill="#d8d8d8"/><path d="M6.8 3.8 L10.2 7.2" stroke="#d8d8d8" stroke-width="1.6"/><path d="M8 5.5 L2.8 10.7 L2.2 11.8 L3.3 11.2 L8.5 6" fill="none" stroke="#bbb" stroke-width="1"/></svg>
<div class="a" style="left:1600px;top:300px;width:49px;height:18px;background:#383838;border-radius:3px;border:1px solid #505050"></div>
<div class="t" style="left:1604px;top:303px;font-size:12px;color:#e6e6e6;">Hex</div>
<svg class="a" style="left:1632px;top:306px;" width="10" height="6" viewBox="0 0 10 6"><path d="M1 1 L5 5 L9 1" stroke="#ccc" fill="none"/></svg>
<div class="a" style="left:1653px;top:299px;width:240px;height:21px;background:#262626;border-radius:3px"></div>
<div class="t" style="left:1658px;top:303px;font-size:11px;color:#666;">#</div>
<div class="t" style="left:1670px;top:303px;font-size:12px;color:#e6e6e6;">6755ff</div>
<div class="a" style="left:1600px;top:330px;width:234px;height:4px;background:#dedede;border-radius:2px"></div>
<svg class="a" style="left:1828px;top:326px;" width="12" height="12" viewBox="0 0 12 12"><circle cx="6" cy="6" r="5" fill="#74c4a8"/><circle cx="6" cy="6" r="2" fill="#5aa88c"/></svg>
<div class="a" style="left:1849px;top:323px;width:44px;height:17px;background:#2e2e2e;border-radius:3px"></div>
<div class="t" style="left:1853px;top:325px;font-size:12px;color:#666;">A</div>
<div class="t" style="left:1866px;top:325px;font-size:12px;color:#e6e6e6;">255</div>
<div class="a" style="left:1597px;top:346px;width:299px;height:137px;background:#2a2a2a;border-radius:3px"></div>
<div class="a" style="left:1599px;top:348px;width:148px;height:20px;background:#444;border-radius:4px 4px 0 0"></div>
<div class="t" style="left:1648px;top:351px;font-size:12px;color:#e6e6e6;">Swatches</div>
<div class="t" style="left:1793px;top:351px;font-size:12px;color:#cfcfcf;">Generator</div>
<div class="a" style="left:1597px;top:368px;width:299px;height:42px;background:#444;"></div>
<div class="a" style="left:1598px;top:371px;width:257px;height:18px;background:#555;border-radius:3px"></div>
<div class="a" style="left:1599px;top:372px;width:62px;height:16px;background:#262626;border-radius:3px"></div>
<svg class="a" style="left:1603px;top:374px;" width="14" height="12" viewBox="0 0 14 12"><path d="M2 1 V11 M5 1 V11 M8 1 L12 11" stroke="#33cc66" stroke-width="1.5"/></svg>
<div class="t" style="left:1620px;top:373px;font-size:12px;color:#e6e6e6;">Library</div>
<svg class="a" style="left:1668px;top:374px;" width="13" height="12" viewBox="0 0 13 12"><rect x="1" y="3" width="11" height="8" fill="none" stroke="#ccc"/><path d="M1 2 H6 M3 6 H10 M3 8 H10" stroke="#ccc"/></svg>
<div class="t" style="left:1686px;top:373px;font-size:12px;color:#e6e6e6;">Project</div>
<svg class="a" style="left:1738px;top:373px;" width="12" height="14" viewBox="0 0 12 14"><path d="M2 1 H7 L10 4 V13 H2Z" fill="none" stroke="#ccc"/></svg>
<div class="t" style="left:1752px;top:373px;font-size:12px;color:#e6e6e6;">Scene</div>
<svg class="a" style="left:1800px;top:373px;" width="13" height="13" viewBox="0 0 13 13"><path d="M6.5 1.5 A5 5 0 1 0 11.5 6.5 L6.5 1.5Z" fill="none" stroke="#ccc"/></svg>
<div class="t" style="left:1816px;top:373px;font-size:12px;color:#e6e6e6;">Labels</div>
<div class="a" style="left:1859px;top:372px;width:17px;height:17px;background:#262626;border-radius:3px"></div>
<svg class="a" style="left:1861px;top:374px;" width="13" height="13" viewBox="0 0 13 13"><rect x="2" y="2" width="4" height="4" fill="#33cc66"/><rect x="7.5" y="2" width="4" height="4" fill="#33cc66"/><rect x="2" y="7.5" width="4" height="4" fill="#33cc66"/><rect x="7.5" y="7.5" width="4" height="4" fill="#33cc66"/></svg>
<div class="a" style="left:1877px;top:372px;width:19px;height:17px;background:#555;border-radius:3px"></div>
<svg class="a" style="left:1880px;top:374px;" width="13" height="13" viewBox="0 0 13 13"><path d="M1 3 H12 M1 6.5 H12 M1 10 H12" stroke="#ddd" stroke-width="1.2"/></svg>
<div class="a" style="left:1599px;top:393px;width:274px;height:16px;background:#3f3f3f;border-radius:3px"></div>
<div class="t" style="left:1601px;top:395px;font-size:12px;color:#e6e6e6;">new</div>
<svg class="a" style="left:1858px;top:398px;" width="10" height="6" viewBox="0 0 10 6"><path d="M1 1 L5 5 L9 1" stroke="#ccc" fill="none"/></svg>
<div class="a" style="left:1880px;top:400px;width:2px;height:2px;background:#ccc;"></div>
<div class="a" style="left:1885px;top:400px;width:2px;height:2px;background:#ccc;"></div>
<div class="a" style="left:1890px;top:400px;width:2px;height:2px;background:#ccc;"></div>
<div class="a" style="left:1597px;top:410px;width:299px;height:73px;background:#262626;"></div>
<div class="a" style="left:1600px;top:412px;width:18px;height:18px;background:#8855ff;border-radius:3px"></div>
<div class="a" style="left:1622px;top:412px;width:18px;height:18px;background:#55a0ff;border-radius:3px"></div>
<div class="a" style="left:1644px;top:412px;width:18px;height:18px;background:#ff7452;border-radius:3px"></div>
<div class="a" style="left:1666px;top:412px;width:18px;height:18px;background:#55ffaa;border-radius:3px"></div>
<div class="a" style="left:1688px;top:412px;width:18px;height:18px;background:#ff5060;border-radius:3px"></div>
<div class="a" style="left:1710px;top:412px;width:18px;height:18px;background:#ff55bb;border-radius:3px"></div>
<div class="a" style="left:1732px;top:412px;width:18px;height:18px;background:#ffd152;border-radius:3px"></div>
<div class="a" style="left:1754px;top:412px;width:18px;height:18px;background:#4169e0;border-radius:3px"></div>
<div class="a" style="left:1776px;top:412px;width:18px;height:18px;background:#55ddcc;border-radius:3px"></div>
<div class="a" style="left:1798px;top:412px;width:18px;height:18px;background:#d580d5;border-radius:3px"></div>
<div class="a" style="left:1820px;top:412px;width:18px;height:18px;background:#b3e88f;border-radius:3px"></div>
<div class="a" style="left:1842px;top:412px;width:18px;height:18px;background:#6755ff;border-radius:3px"></div>
<div class="a" style="left:1593px;top:485px;width:321px;height:5px;background:#151515;"></div>
<div class="a" style="left:1593px;top:490px;width:321px;height:22px;background:#1c1c1c;"></div>
<div class="a" style="left:1593px;top:490px;width:38px;height:22px;background:#454545;border-radius:4px 4px 0 0"></div>
<div class="t" style="left:1599px;top:495px;font-size:12px;color:#e6e6e6;">Align</div>
<div class="a" style="left:1593px;top:512px;width:321px;height:68px;background:#444;"></div>
<div class="t" style="left:1601px;top:524px;font-size:12px;color:#e6e6e6;">Alignment</div>
<div class="t" style="left:1601px;top:552px;font-size:12px;color:#e6e6e6;">Distribution</div>
<div class="a" style="left:1790px;top:523px;width:53px;height:17px;background:#2a2a2a;border-radius:4px;border:1px solid #222"></div>
<div class="a" style="left:1808px;top:524px;width:1px;height:15px;background:#444;"></div>
<div class="a" style="left:1825px;top:524px;width:1px;height:15px;background:#444;"></div>
<div class="a" style="left:1852px;top:523px;width:53px;height:17px;background:#2a2a2a;border-radius:4px;border:1px solid #222"></div>
<div class="a" style="left:1870px;top:524px;width:1px;height:15px;background:#444;"></div>
<div class="a" style="left:1887px;top:524px;width:1px;height:15px;background:#444;"></div>
<div class="a" style="left:1790px;top:551px;width:53px;height:17px;background:#2a2a2a;border-radius:4px;border:1px solid #222"></div>
<div class="a" style="left:1808px;top:552px;width:1px;height:15px;background:#444;"></div>
<div class="a" style="left:1825px;top:552px;width:1px;height:15px;background:#444;"></div>
<svg class="a" style="left:1790px;top:523px;" width="53" height="17" viewBox="0 0 53 17"><path d="M4 3 V14 M6 6 H11 M6 11 H13" stroke="#e6e6e6" stroke-width="1.4"/><path d="M26.5 3 V14 M22 6 H31 M20 11 H33" stroke="#e6e6e6" stroke-width="1.4"/><path d="M49 3 V14 M42 6 H47 M40 11 H47" stroke="#e6e6e6" stroke-width="1.4"/></svg>
<svg class="a" style="left:1852px;top:523px;" width="53" height="17" viewBox="0 0 53 17"><path d="M3 3 H14 M6 5 V12 M11 5 V10" stroke="#e6e6e6" stroke-width="1.4"/><path d="M20 8.5 H33 M24 4 V13 M29 5 V12" stroke="#e6e6e6" stroke-width="1.4"/><path d="M39 14 H50 M42 7 V12 M47 4 V12" stroke="#e6e6e6" stroke-width="1.4"/></svg>
<svg class="a" style="left:1790px;top:551px;" width="53" height="17" viewBox="0 0 53 17"><path d="M4 3 V14 M9 3 V14 M6.5 5 V12" stroke="#e6e6e6" stroke-width="1.4"/><path d="M20 4 H33 M20 13 H33 M22 8.5 H31" stroke="#e6e6e6" stroke-width="1.4"/><path d="M39 14 L42 11 M44 9 L47 6 M49 4 H51" stroke="#e6e6e6" stroke-width="1.4" stroke-dasharray="2 1"/></svg>
<div class="a" style="left:1593px;top:580px;width:321px;height:6px;background:#151515;"></div>
<div class="a" style="left:494px;top:586px;width:1420px;height:22px;background:#1c1c1c;"></div>
<div class="a" style="left:494px;top:586px;width:89px;height:22px;background:#454545;border-radius:4px 4px 0 0"></div>
<div class="a" style="left:584px;top:587px;width:100px;height:21px;background:#242424;border-radius:4px 4px 0 0"></div>
<div class="a" style="left:685px;top:587px;width:112px;height:21px;background:#242424;border-radius:4px 4px 0 0"></div>
<div class="t" style="left:499px;top:591px;font-size:12px;color:#e6e6e6;">Scene Window</div>
<div class="t" style="left:589px;top:591px;font-size:12px;color:#e6e6e6;">JavaScript Editor</div>
<div class="t" style="left:690px;top:591px;font-size:12px;color:#e6e6e6;">Dependency Graph</div>
<div class="a" style="left:494px;top:608px;width:1420px;height:22px;background:#2a2a2a;"></div>
<div class="t" style="left:627px;top:613px;font-size:12px;color:#bdbdbd;">Composition 1</div>
<svg class="a" style="left:834px;top:614px;" width="10" height="10" viewBox="0 0 10 10"><path d="M1 1 L9 9 M9 1 L1 9" stroke="#aaa" stroke-width="1.1"/></svg>
<div class="a" style="left:852px;top:613px;width:1px;height:12px;background:#aaa;"></div>
<div class="a" style="left:494px;top:630px;width:465px;height:22px;background:#444;"></div>
<div class="a" style="left:496px;top:632px;width:255px;height:20px;background:#2a2a2a;border-radius:10px"></div>
<svg class="a" style="left:500px;top:635px;" width="14" height="14" viewBox="0 0 14 14"><circle cx="6" cy="6" r="4.5" stroke="#ddd" stroke-width="1.3" fill="none"/><path d="M9.5 9.5 L12.5 12.5" stroke="#ddd" stroke-width="2"/></svg>
<div class="t" style="left:520px;top:636px;font-size:12px;color:#8a8a8a;">Enter a layer name</div>
<div class="a" style="left:753px;top:633px;width:19px;height:19px;background:#2e2e2e;border-radius:3px;border:1px solid #222"></div>
<svg class="a" style="left:756px;top:636px;" width="13" height="13" viewBox="0 0 13 13"><path d="M6.5 1 V12 M1 6.5 H12" stroke="#eee" stroke-width="1.8"/></svg>
<div class="a" style="left:797px;top:633px;width:19px;height:19px;background:#2e2e2e;border-radius:3px;border:1px solid #222"></div>
<svg class="a" style="left:799px;top:635px;" width="15" height="15" viewBox="0 0 15 15"><circle cx="9" cy="6" r="5" fill="#ddd"/><circle cx="7" cy="8" r="4.5" fill="#888"/><circle cx="5" cy="10" r="3.5" fill="#555"/></svg>
<div class="a" style="left:819px;top:633px;width:19px;height:19px;background:#2e2e2e;border-radius:3px;border:1px solid #222"></div>
<svg class="a" style="left:821px;top:635px;" width="15" height="15" viewBox="0 0 15 15"><circle cx="3" cy="3" r="1" fill="#ddd"/><circle cx="8" cy="2" r="1" fill="#ddd"/><circle cx="3" cy="8" r="1" fill="#ddd"/><path d="M9 5 V13 M5 9 H13" stroke="#eee" stroke-width="1.5"/></svg>
<div class="a" style="left:841px;top:633px;width:19px;height:19px;background:#2e2e2e;border-radius:3px;border:1px solid #222"></div>
<svg class="a" style="left:843px;top:635px;" width="15" height="15" viewBox="0 0 15 15"><path d="M1 3 H14 M1 7.5 H14 M1 12 H14" stroke="#ccc" stroke-width="1"/><circle cx="5" cy="3" r="1.5" fill="#2e2e2e" stroke="#ccc"/><circle cx="10" cy="7.5" r="1.5" fill="#2e2e2e" stroke="#ccc"/><circle cx="6" cy="12" r="1.5" fill="#2e2e2e" stroke="#ccc"/></svg>
<div class="a" style="left:863px;top:633px;width:94px;height:19px;background:#262626;border-radius:3px"></div>
<div class="t" style="left:868px;top:636px;font-size:12px;color:#555;">F</div>
<div class="t" style="left:880px;top:636px;font-size:12px;color:#e6e6e6;">26</div>
<div class="a" style="left:494px;top:652px;width:465px;height:20px;background:#444;"></div>
<svg class="a" style="left:500px;top:655px;" width="12" height="14" viewBox="0 0 12 14"><path d="M3 6 V4 A3 3 0 0 1 9 4 V6" stroke="#ccc" stroke-width="1.3" fill="none"/><rect x="2" y="6" width="8" height="7" fill="#ccc"/><rect x="5" y="9" width="2" height="2" fill="#444"/></svg>
<svg class="a" style="left:516px;top:657px;" width="16" height="10" viewBox="0 0 16 10"><ellipse cx="8" cy="5" rx="7" ry="4" fill="none" stroke="#bbb" stroke-width="1"/><circle cx="8" cy="5" r="2.2" fill="#bbb"/></svg>
<svg class="a" style="left:536px;top:654px;" width="14" height="15" viewBox="0 0 14 15"><path d="M7 1 L13 4 V11 L7 14 L1 11 V4Z M1 4 L7 7 L13 4 M7 7 V14" stroke="#bbb" stroke-width="1" fill="none"/></svg>
<svg class="a" style="left:555px;top:655px;" width="15" height="13" viewBox="0 0 15 13"><path d="M1 4.5 H4 L7 1.5 V11.5 L4 8.5 H1Z" fill="#ccc"/><path d="M9 4 Q10.5 6.5 9 9 M11 2.5 Q13.5 6.5 11 10.5" stroke="#ccc" stroke-width="1.2" fill="none"/></svg>
<svg class="a" style="left:574px;top:655px;" width="14" height="14" viewBox="0 0 14 14"><path d="M8.5 3 L10 1.5 a1.8 1.8 0 0 1 2.5 2.5 L11 5.5 Z" fill="#d8d8d8"/><path d="M6.8 3.8 L10.2 7.2" stroke="#d8d8d8" stroke-width="1.6"/><path d="M8 5.5 L2.8 10.7 L2.2 11.8 L3.3 11.2 L8.5 6" fill="none" stroke="#bbb" stroke-width="1"/></svg>
<svg class="a" style="left:593px;top:657px;" width="15" height="10" viewBox="0 0 15 10"><path d="M1 5 L5 1 H14 V9 H5Z" fill="#d8d8d8"/><circle cx="5.5" cy="5" r="1.5" fill="#333"/></svg>
<div class="t" style="left:649px;top:656px;font-size:12px;color:#e6e6e6;">Name</div>
<div class="a" style="left:494px;top:672px;width:453px;height:291px;background:#2a2a2a;"></div>
<div class="a" style="left:494px;top:672px;width:451px;height:22px;background:#333;"></div>
<div class="a" style="left:496px;top:674px;width:18px;height:18px;background:#262626;border-radius:3px"></div>
<div class="a" style="left:515px;top:674px;width:18px;height:18px;background:#262626;border-radius:3px"></div>
<svg class="a" style="left:517px;top:676px;" width="14" height="14" viewBox="0 0 14 14"><path d="M11.5 5.5 A5 5 0 1 1 9 2.6" stroke="#ddd" stroke-width="1.1" fill="none"/><path d="M4.5 6.5 L7 9 L12.5 3" stroke="#ddd" stroke-width="1.6" fill="none"/></svg>
<div class="a" style="left:572px;top:674px;width:18px;height:18px;background:#72e09a;border-radius:4px;border:1px solid #1c1c1c"></div>
<svg class="a" style="left:593px;top:678px;" width="15" height="10" viewBox="0 0 15 10"><path d="M1 5 L5 1 H14 V9 H5Z" fill="#d8d8d8"/><circle cx="5.5" cy="5" r="1.5" fill="#333"/></svg>
<div class="a" style="left:610px;top:674px;width:32px;height:18px;background:#2c2c2c;border-radius:3px"></div>
<svg class="a" style="left:613px;top:680px;" width="10" height="6" viewBox="0 0 10 6"><path d="M1 1 L5 5 L9 1" stroke="#888" fill="none"/></svg>
<svg class="a" style="left:649px;top:675px;" width="16" height="16" viewBox="0 0 16 16"><rect x="0" y="6" width="11" height="9" fill="#9cd2ff"/><rect x="6" y="0.5" width="9" height="6" fill="#333"/><path d="M7 1.5 H14.5 M7 4 H14.5 M7 6.5 H14.5" stroke="#e6e6e6" stroke-width="1.1"/></svg>
<div class="t" style="left:667px;top:677px;font-size:12px;color:#e6e6e6;">Color Array</div>
<div class="a" style="left:905px;top:674px;width:21px;height:18px;background:#262626;border-radius:3px"></div>
<svg class="a" style="left:906px;top:676px;" width="20" height="14" viewBox="0 0 20 14"><path d="M7 3 V11 L2.5 7Z" fill="#e8c86a"/><path d="M12 3 V11 L16.5 7Z" fill="#d66ae8"/></svg>
<svg class="a" style="left:930px;top:678px;" width="11" height="11" viewBox="0 0 11 11"><circle cx="5.5" cy="5.5" r="4.5" fill="none" stroke="#777" stroke-width="1.1"/></svg>
<div class="a" style="left:494px;top:694px;width:451px;height:22px;background:#333;"></div>
<div class="a" style="left:496px;top:696px;width:18px;height:18px;background:#262626;border-radius:3px"></div>
<div class="a" style="left:515px;top:696px;width:18px;height:18px;background:#262626;border-radius:3px"></div>
<svg class="a" style="left:517px;top:698px;" width="14" height="14" viewBox="0 0 14 14"><path d="M11.5 5.5 A5 5 0 1 1 9 2.6" stroke="#ddd" stroke-width="1.1" fill="none"/><path d="M4.5 6.5 L7 9 L12.5 3" stroke="#ddd" stroke-width="1.6" fill="none"/></svg>
<div class="a" style="left:572px;top:696px;width:18px;height:18px;background:#c8ee7c;border-radius:4px;border:1px solid #1c1c1c"></div>
<svg class="a" style="left:593px;top:700px;" width="15" height="10" viewBox="0 0 15 10"><path d="M1 5 L5 1 H14 V9 H5Z" fill="#d8d8d8"/><circle cx="5.5" cy="5" r="1.5" fill="#333"/></svg>
<svg class="a" style="left:668px;top:697px;" width="16" height="16" viewBox="0 0 16 16"><path d="M1.0 1.5 L4.0 4.5 M4.0 1.5 L1.0 4.5" stroke="#8ed68f" stroke-width="1.1"/><path d="M9.0 1.0 L12.0 4.0 M12.0 1.0 L9.0 4.0" stroke="#8ed68f" stroke-width="1.1"/><path d="M1.0 11.5 L4.0 14.5 M4.0 11.5 L1.0 14.5" stroke="#8ed68f" stroke-width="1.1"/><path d="M11.0 10.5 L14.0 13.5 M14.0 10.5 L11.0 13.5" stroke="#8ed68f" stroke-width="1.1"/><path d="M5 6.5 L8 9.5 M8 6.5 L5 9.5 M13 6 L15 8 M15 6 L13 8" stroke="#ccc" stroke-width="1"/></svg>
<div class="t" style="left:686px;top:699px;font-size:12px;color:#e6e6e6;">Random [Index]</div>
<div class="a" style="left:905px;top:696px;width:21px;height:18px;background:#262626;border-radius:3px"></div>
<svg class="a" style="left:906px;top:698px;" width="20" height="14" viewBox="0 0 20 14"><path d="M7 3 V11 L2.5 7Z" fill="#666"/><path d="M12 3 V11 L16.5 7Z" fill="#d66ae8"/></svg>
<svg class="a" style="left:930px;top:700px;" width="11" height="11" viewBox="0 0 11 11"><circle cx="5.5" cy="5.5" r="4.5" fill="none" stroke="#777" stroke-width="1.1"/></svg>
<div class="a" style="left:494px;top:716px;width:451px;height:22px;background:#333;"></div>
<div class="a" style="left:496px;top:718px;width:18px;height:18px;background:#262626;border-radius:3px"></div>
<div class="a" style="left:515px;top:718px;width:18px;height:18px;background:#262626;border-radius:3px"></div>
<svg class="a" style="left:517px;top:720px;" width="14" height="14" viewBox="0 0 14 14"><path d="M11.5 5.5 A5 5 0 1 1 9 2.6" stroke="#ddd" stroke-width="1.1" fill="none"/><path d="M4.5 6.5 L7 9 L12.5 3" stroke="#ddd" stroke-width="1.6" fill="none"/></svg>
<div class="a" style="left:572px;top:718px;width:18px;height:18px;background:#c8ee7c;border-radius:4px;border:1px solid #1c1c1c"></div>
<svg class="a" style="left:593px;top:722px;" width="15" height="10" viewBox="0 0 15 10"><path d="M1 5 L5 1 H14 V9 H5Z" fill="#d8d8d8"/><circle cx="5.5" cy="5" r="1.5" fill="#333"/></svg>
<svg class="a" style="left:645px;top:719px;" width="18" height="16" viewBox="0 0 18 16"><path d="M1 9 C3 2, 5 2, 7 8 S11 14, 13 8 S16 3, 18 6" stroke="#8ed68f" stroke-width="1.3" fill="none"/></svg>
<div class="t" style="left:667px;top:721px;font-size:12px;color:#e6e6e6;">Oscillator [Position.Z] Cosine</div>
<div class="a" style="left:905px;top:718px;width:21px;height:18px;background:#262626;border-radius:3px"></div>
<svg class="a" style="left:906px;top:720px;" width="20" height="14" viewBox="0 0 20 14"><path d="M7 3 V11 L2.5 7Z" fill="#e8c86a"/><path d="M12 3 V11 L16.5 7Z" fill="#d66ae8"/></svg>
<svg class="a" style="left:930px;top:722px;" width="11" height="11" viewBox="0 0 11 11"><circle cx="5.5" cy="5.5" r="4.5" fill="none" stroke="#777" stroke-width="1.1"/></svg>
<div class="a" style="left:494px;top:738px;width:451px;height:22px;background:#333;"></div>
<div class="a" style="left:496px;top:740px;width:18px;height:18px;background:#262626;border-radius:3px"></div>
<div class="a" style="left:515px;top:740px;width:18px;height:18px;background:#262626;border-radius:3px"></div>
<svg class="a" style="left:517px;top:742px;" width="14" height="14" viewBox="0 0 14 14"><path d="M11.5 5.5 A5 5 0 1 1 9 2.6" stroke="#ddd" stroke-width="1.1" fill="none"/><path d="M4.5 6.5 L7 9 L12.5 3" stroke="#ddd" stroke-width="1.6" fill="none"/></svg>
<div class="a" style="left:572px;top:740px;width:18px;height:18px;background:#c8ee7c;border-radius:4px;border:1px solid #1c1c1c"></div>
<svg class="a" style="left:593px;top:744px;" width="15" height="10" viewBox="0 0 15 10"><path d="M1 5 L5 1 H14 V9 H5Z" fill="#d8d8d8"/><circle cx="5.5" cy="5" r="1.5" fill="#333"/></svg>
<svg class="a" style="left:649px;top:741px;" width="16" height="16" viewBox="0 0 16 16"><path d="M4 2 H12 L8 7Z" fill="#8ed68f"/><path d="M8 6 V15" stroke="#ddd" stroke-width="1.4"/><circle cx="2" cy="8" r="1" fill="#ddd"/><circle cx="14" cy="8" r="1" fill="#ddd"/></svg>
<div class="t" style="left:667px;top:743px;font-size:12px;color:#e6e6e6;">Frame [Time]</div>
<div class="a" style="left:905px;top:740px;width:21px;height:18px;background:#262626;border-radius:3px"></div>
<svg class="a" style="left:906px;top:742px;" width="20" height="14" viewBox="0 0 20 14"><path d="M7 3 V11 L2.5 7Z" fill="#666"/><path d="M12 3 V11 L16.5 7Z" fill="#d66ae8"/></svg>
<svg class="a" style="left:930px;top:744px;" width="11" height="11" viewBox="0 0 11 11"><circle cx="5.5" cy="5.5" r="4.5" fill="none" stroke="#777" stroke-width="1.1"/></svg>
<div class="a" style="left:494px;top:760px;width:451px;height:22px;background:#333;"></div>
<div class="a" style="left:496px;top:762px;width:18px;height:18px;background:#262626;border-radius:3px"></div>
<div class="a" style="left:515px;top:762px;width:18px;height:18px;background:#262626;border-radius:3px"></div>
<svg class="a" style="left:517px;top:764px;" width="14" height="14" viewBox="0 0 14 14"><path d="M11.5 5.5 A5 5 0 1 1 9 2.6" stroke="#ddd" stroke-width="1.1" fill="none"/><path d="M4.5 6.5 L7 9 L12.5 3" stroke="#ddd" stroke-width="1.6" fill="none"/></svg>
<div class="a" style="left:572px;top:762px;width:18px;height:18px;background:#c8ee7c;border-radius:4px;border:1px solid #1c1c1c"></div>
<svg class="a" style="left:593px;top:766px;" width="15" height="10" viewBox="0 0 15 10"><path d="M1 5 L5 1 H14 V9 H5Z" fill="#d8d8d8"/><circle cx="5.5" cy="5" r="1.5" fill="#333"/></svg>
<svg class="a" style="left:645px;top:763px;" width="18" height="16" viewBox="0 0 18 16"><path d="M1 9 C3 2, 5 2, 7 8 S11 14, 13 8 S16 3, 18 6" stroke="#8ed68f" stroke-width="1.3" fill="none"/></svg>
<div class="t" style="left:667px;top:765px;font-size:12px;color:#e6e6e6;">Oscillator [Position.X] Sine</div>
<div class="a" style="left:905px;top:762px;width:21px;height:18px;background:#262626;border-radius:3px"></div>
<svg class="a" style="left:906px;top:764px;" width="20" height="14" viewBox="0 0 20 14"><path d="M7 3 V11 L2.5 7Z" fill="#e8c86a"/><path d="M12 3 V11 L16.5 7Z" fill="#d66ae8"/></svg>
<svg class="a" style="left:930px;top:766px;" width="11" height="11" viewBox="0 0 11 11"><circle cx="5.5" cy="5.5" r="4.5" fill="none" stroke="#777" stroke-width="1.1"/></svg>
<div class="a" style="left:494px;top:782px;width:451px;height:22px;background:#333;"></div>
<div class="a" style="left:496px;top:784px;width:18px;height:18px;background:#262626;border-radius:3px"></div>
<div class="a" style="left:515px;top:784px;width:18px;height:18px;background:#262626;border-radius:3px"></div>
<svg class="a" style="left:517px;top:786px;" width="14" height="14" viewBox="0 0 14 14"><path d="M11.5 5.5 A5 5 0 1 1 9 2.6" stroke="#ddd" stroke-width="1.1" fill="none"/><path d="M4.5 6.5 L7 9 L12.5 3" stroke="#ddd" stroke-width="1.6" fill="none"/></svg>
<div class="a" style="left:572px;top:784px;width:18px;height:18px;background:#c8ee7c;border-radius:4px;border:1px solid #1c1c1c"></div>
<svg class="a" style="left:593px;top:788px;" width="15" height="10" viewBox="0 0 15 10"><path d="M1 5 L5 1 H14 V9 H5Z" fill="#d8d8d8"/><circle cx="5.5" cy="5" r="1.5" fill="#333"/></svg>
<svg class="a" style="left:649px;top:785px;" width="18" height="16" viewBox="0 0 18 16"><path d="M3 3 V14 H14" stroke="#ddd" stroke-width="1.1" fill="none"/><path d="M4 13 L10 7" stroke="#ddd" stroke-width="1.1"/><path d="M1 5 L3 2.5 L5 5 M13 12 L15.5 14 L13 16" stroke="#8ed68f" stroke-width="1.1" fill="none"/></svg>
<div class="t" style="left:667px;top:787px;font-size:12px;color:#e6e6e6;">3D Matrix [Duplicator]</div>
<div class="a" style="left:905px;top:784px;width:21px;height:18px;background:#262626;border-radius:3px"></div>
<svg class="a" style="left:906px;top:786px;" width="20" height="14" viewBox="0 0 20 14"><path d="M7 3 V11 L2.5 7Z" fill="#e8c86a"/><path d="M12 3 V11 L16.5 7Z" fill="#d66ae8"/></svg>
<svg class="a" style="left:930px;top:788px;" width="11" height="11" viewBox="0 0 11 11"><circle cx="5.5" cy="5.5" r="4.5" fill="none" stroke="#777" stroke-width="1.1"/></svg>
<div class="a" style="left:494px;top:804px;width:451px;height:22px;background:#333;"></div>
<div class="a" style="left:497px;top:805px;width:446px;height:20px;background:#5a533f;border-radius:2px"></div>
<div class="a" style="left:496px;top:806px;width:18px;height:18px;background:#262626;border-radius:3px"></div>
<div class="a" style="left:515px;top:806px;width:18px;height:18px;background:#262626;border-radius:3px"></div>
<svg class="a" style="left:516px;top:810px;" width="16" height="10" viewBox="0 0 16 10"><ellipse cx="8" cy="5" rx="6.5" ry="4" fill="none" stroke="#ddd" stroke-width="1.1"/><circle cx="8" cy="5" r="2" fill="#ddd"/></svg>
<div class="a" style="left:534px;top:806px;width:18px;height:18px;background:#262626;border-radius:3px"></div>
<div class="a" style="left:572px;top:806px;width:18px;height:18px;background:#ffe07a;border-radius:4px;border:1px solid #1c1c1c"></div>
<svg class="a" style="left:593px;top:810px;" width="15" height="10" viewBox="0 0 15 10"><path d="M1 5 L5 1 H14 V9 H5Z" fill="#d8d8d8"/><circle cx="5.5" cy="5" r="1.5" fill="#333"/></svg>
<svg class="a" style="left:649px;top:807px;" width="16" height="16" viewBox="0 0 16 16"><rect x="2" y="2" width="2" height="2" fill="#e8d36a"/><rect x="2" y="7" width="2" height="2" fill="#e8d36a"/><rect x="2" y="12" width="2" height="2" fill="#e8d36a"/><rect x="7" y="2" width="2" height="2" fill="#e8d36a"/><rect x="7" y="7" width="2" height="2" fill="#e8d36a"/><rect x="7" y="12" width="2" height="2" fill="#e8d36a"/><rect x="12" y="2" width="2" height="2" fill="#e8d36a"/><rect x="12" y="7" width="2" height="2" fill="#e8d36a"/><rect x="12" y="12" width="2" height="2" fill="#e8d36a"/></svg>
<div class="t" style="left:667px;top:809px;font-size:12px;color:#e6e6e6;">Duplicator</div>
<div class="a" style="left:905px;top:806px;width:21px;height:18px;background:#262626;border-radius:3px"></div>
<svg class="a" style="left:906px;top:808px;" width="20" height="14" viewBox="0 0 20 14"><path d="M7 3 V11 L2.5 7Z" fill="#e8c86a"/><path d="M12 3 V11 L16.5 7Z" fill="#d66ae8"/></svg>
<svg class="a" style="left:930px;top:810px;" width="11" height="11" viewBox="0 0 11 11"><circle cx="5.5" cy="5.5" r="4.5" fill="none" stroke="#777" stroke-width="1.1"/></svg>
<div class="a" style="left:494px;top:826px;width:451px;height:22px;background:#333;"></div>
<div class="a" style="left:496px;top:828px;width:18px;height:18px;background:#262626;border-radius:3px"></div>
<div class="a" style="left:515px;top:828px;width:18px;height:18px;background:#262626;border-radius:3px"></div>
<div class="a" style="left:534px;top:828px;width:18px;height:18px;background:#262626;border-radius:3px"></div>
<div class="a" style="left:572px;top:828px;width:18px;height:18px;background:#ffe07a;border-radius:4px;border:1px solid #1c1c1c"></div>
<svg class="a" style="left:593px;top:832px;" width="15" height="10" viewBox="0 0 15 10"><path d="M1 5 L5 1 H14 V9 H5Z" fill="#d8d8d8"/><circle cx="5.5" cy="5" r="1.5" fill="#333"/></svg>
<div class="a" style="left:610px;top:828px;width:32px;height:18px;background:#2c2c2c;border-radius:3px"></div>
<svg class="a" style="left:613px;top:834px;" width="10" height="6" viewBox="0 0 10 6"><path d="M1 1 L5 5 L9 1" stroke="#888" fill="none"/></svg>
<svg class="a" style="left:649px;top:829px;" width="16" height="16" viewBox="0 0 16 16"><rect x="1.5" y="1.5" width="13" height="13" fill="none" stroke="#e8d36a" stroke-width="1.2" stroke-dasharray="0 3.5 6 3.5"/><rect x="0" y="0" width="3" height="3" fill="#eee"/><rect x="13" y="0" width="3" height="3" fill="#eee"/><rect x="0" y="13" width="3" height="3" fill="#eee"/><rect x="13" y="13" width="3" height="3" fill="#eee"/></svg>
<div class="t" style="left:667px;top:831px;font-size:12px;color:#9a9a9a;">Ellipse Shape</div>
<div class="a" style="left:905px;top:828px;width:21px;height:18px;background:#262626;border-radius:3px"></div>
<svg class="a" style="left:906px;top:830px;" width="20" height="14" viewBox="0 0 20 14"><path d="M7 3 V11 L2.5 7Z" fill="#e8c86a"/><path d="M12 3 V11 L16.5 7Z" fill="#d66ae8"/></svg>
<svg class="a" style="left:930px;top:832px;" width="11" height="11" viewBox="0 0 11 11"><circle cx="5.5" cy="5.5" r="4.5" fill="none" stroke="#777" stroke-width="1.1"/></svg>
<div class="a" style="left:494px;top:848px;width:451px;height:22px;background:#333;"></div>
<div class="a" style="left:496px;top:850px;width:18px;height:18px;background:#262626;border-radius:3px"></div>
<div class="a" style="left:515px;top:850px;width:18px;height:18px;background:#262626;border-radius:3px"></div>
<svg class="a" style="left:517px;top:852px;" width="14" height="14" viewBox="0 0 14 14"><path d="M11.5 5.5 A5 5 0 1 1 9 2.6" stroke="#ddd" stroke-width="1.1" fill="none"/><path d="M4.5 6.5 L7 9 L12.5 3" stroke="#ddd" stroke-width="1.6" fill="none"/></svg>
<div class="a" style="left:572px;top:850px;width:18px;height:18px;background:#5b8ee8;border-radius:4px;border:1px solid #1c1c1c"></div>
<svg class="a" style="left:593px;top:854px;" width="15" height="10" viewBox="0 0 15 10"><path d="M1 5 L5 1 H14 V9 H5Z" fill="#d8d8d8"/><circle cx="5.5" cy="5" r="1.5" fill="#333"/></svg>
<svg class="a" style="left:668px;top:851px;" width="16" height="16" viewBox="0 0 16 16"><rect x="1" y="5" width="10" height="10" fill="#9cd2ff"/><path d="M6 8 V14" stroke="#333" stroke-width="1.6"/><path d="M13 0 L14 3 L16 4 L14 5 L13 8 L12 5 L10 4 L12 3Z" fill="#eee"/><circle cx="9.5" cy="1.5" r="1" fill="#ddd"/></svg>
<div class="t" style="left:686px;top:853px;font-size:12px;color:#e6e6e6;">Index Context [Number]</div>
<div class="a" style="left:905px;top:850px;width:21px;height:18px;background:#262626;border-radius:3px"></div>
<svg class="a" style="left:906px;top:852px;" width="20" height="14" viewBox="0 0 20 14"><path d="M7 3 V11 L2.5 7Z" fill="#666"/><path d="M12 3 V11 L16.5 7Z" fill="#d66ae8"/></svg>
<svg class="a" style="left:930px;top:854px;" width="11" height="11" viewBox="0 0 11 11"><circle cx="5.5" cy="5.5" r="4.5" fill="none" stroke="#777" stroke-width="1.1"/></svg>
<div class="a" style="left:494px;top:870px;width:451px;height:22px;background:#333;"></div>
<div class="a" style="left:496px;top:872px;width:18px;height:18px;background:#262626;border-radius:3px"></div>
<div class="a" style="left:515px;top:872px;width:18px;height:18px;background:#262626;border-radius:3px"></div>
<svg class="a" style="left:517px;top:874px;" width="14" height="14" viewBox="0 0 14 14"><path d="M11.5 5.5 A5 5 0 1 1 9 2.6" stroke="#ddd" stroke-width="1.1" fill="none"/><path d="M4.5 6.5 L7 9 L12.5 3" stroke="#ddd" stroke-width="1.6" fill="none"/></svg>
<div class="a" style="left:572px;top:872px;width:18px;height:18px;background:#5b8ee8;border-radius:4px;border:1px solid #1c1c1c"></div>
<svg class="a" style="left:593px;top:876px;" width="15" height="10" viewBox="0 0 15 10"><path d="M1 5 L5 1 H14 V9 H5Z" fill="#d8d8d8"/><circle cx="5.5" cy="5" r="1.5" fill="#333"/></svg>
<svg class="a" style="left:668px;top:873px;" width="16" height="16" viewBox="0 0 16 16"><text x="1" y="9" font-size="9" fill="#9cd2ff" font-family="Liberation Sans">abc</text><path d="M1 11 H15 M1 14 H4 M6 14 H10 M12 14 H15" stroke="#ddd" stroke-width="1"/></svg>
<div class="t" style="left:686px;top:875px;font-size:12px;color:#e6e6e6;">String Generator [String]</div>
<div class="a" style="left:905px;top:872px;width:21px;height:18px;background:#262626;border-radius:3px"></div>
<svg class="a" style="left:906px;top:874px;" width="20" height="14" viewBox="0 0 20 14"><path d="M7 3 V11 L2.5 7Z" fill="#e8c86a"/><path d="M12 3 V11 L16.5 7Z" fill="#d66ae8"/></svg>
<svg class="a" style="left:930px;top:876px;" width="11" height="11" viewBox="0 0 11 11"><circle cx="5.5" cy="5.5" r="4.5" fill="none" stroke="#777" stroke-width="1.1"/></svg>
<div class="a" style="left:494px;top:892px;width:451px;height:22px;background:#333;"></div>
<div class="a" style="left:496px;top:894px;width:18px;height:18px;background:#262626;border-radius:3px"></div>
<div class="a" style="left:515px;top:894px;width:18px;height:18px;background:#262626;border-radius:3px"></div>
<svg class="a" style="left:516px;top:898px;" width="16" height="10" viewBox="0 0 16 10"><ellipse cx="8" cy="5" rx="6.5" ry="4" fill="none" stroke="#555" stroke-width="1.1"/><circle cx="8" cy="5" r="2" fill="#555"/></svg>
<div class="a" style="left:534px;top:894px;width:18px;height:18px;background:#262626;border-radius:3px"></div>
<div class="a" style="left:572px;top:894px;width:18px;height:18px;background:#c58ef8;border-radius:4px;border:1px solid #1c1c1c"></div>
<svg class="a" style="left:593px;top:898px;" width="15" height="10" viewBox="0 0 15 10"><path d="M1 5 L5 1 H14 V9 H5Z" fill="#d8d8d8"/><circle cx="5.5" cy="5" r="1.5" fill="#333"/></svg>
<svg class="a" style="left:668px;top:895px;" width="17" height="17" viewBox="0 0 17 17"><rect x="1.5" y="1.5" width="14" height="14" fill="none" stroke="#ddd" stroke-width="1" stroke-dasharray="0 3 8 3"/><rect x="0" y="0" width="3" height="3" fill="#eee"/><rect x="14" y="0" width="3" height="3" fill="#eee"/><rect x="0" y="14" width="3" height="3" fill="#eee"/><rect x="14" y="14" width="3" height="3" fill="#eee"/><path d="M4.5 4.5 H12.5 V6.5 H9.5 V13 H7.5 V6.5 H4.5Z" fill="#e8d36a"/></svg>
<div class="t" style="left:686px;top:897px;font-size:12px;color:#9a9a9a;">Cavalry</div>
<div class="a" style="left:905px;top:894px;width:21px;height:18px;background:#262626;border-radius:3px"></div>
<svg class="a" style="left:906px;top:896px;" width="20" height="14" viewBox="0 0 20 14"><path d="M7 3 V11 L2.5 7Z" fill="#e8c86a"/><path d="M12 3 V11 L16.5 7Z" fill="#888"/></svg>
<svg class="a" style="left:930px;top:898px;" width="11" height="11" viewBox="0 0 11 11"><circle cx="5.5" cy="5.5" r="4.5" fill="none" stroke="#777" stroke-width="1.1"/></svg>
<div class="a" style="left:906px;top:763px;width:9px;height:16px;background:none;border:1px solid #c9a84a;border-radius:2px"></div>
<div class="a" style="left:906px;top:785px;width:9px;height:16px;background:none;border:1px solid #c9a84a;border-radius:2px"></div>
<div class="a" style="left:916px;top:785px;width:9px;height:16px;background:none;border:1px solid #c060d8;border-radius:2px"></div>
<div class="a" style="left:916px;top:829px;width:9px;height:16px;background:none;border:1px solid #c060d8;border-radius:2px"></div>
<div class="a" style="left:947px;top:672px;width:12px;height:291px;background:#2a2a2a;"></div>
<div class="a" style="left:948px;top:675px;width:9px;height:284px;background:#4a4a4a;border-radius:5px"></div>
<div class="a" style="left:494px;top:963px;width:465px;height:13px;background:#2a2a2a;"></div>
<div class="a" style="left:496px;top:964px;width:449px;height:10px;background:#4a4a4a;border-radius:5px"></div>
<div class="a" style="left:494px;top:976px;width:465px;height:22px;background:#3a3a3a;"></div>
<div class="a" style="left:497px;top:978px;width:19px;height:18px;background:#2e2e2e;border-radius:3px;border:1px solid #222"></div>
<svg class="a" style="left:499px;top:982px;" width="15" height="10" viewBox="0 0 15 10"><path d="M1 5 L5 1 H14 V9 H5Z" fill="#d8d8d8"/><circle cx="5.5" cy="5" r="1.5" fill="#333"/></svg>
<div class="t" style="left:520px;top:981px;font-size:12px;color:#e6e6e6;">1 selected</div>
<div class="a" style="left:750px;top:978px;width:19px;height:18px;background:#2e2e2e;border-radius:3px;border:1px solid #222"></div>
<svg class="a" style="left:753px;top:981px;" width="13" height="12" viewBox="0 0 13 12"><rect x="1" y="1" width="11" height="10" fill="none" stroke="#ddd" stroke-width="1.2"/><rect x="5" y="4.5" width="3" height="3" fill="#ddd"/></svg>
<div class="a" style="left:774px;top:978px;width:183px;height:18px;background:#555;border-radius:4px"></div>
<div class="a" style="left:775px;top:979px;width:85px;height:16px;background:#262626;border-radius:3px"></div>
<svg class="a" style="left:779px;top:981px;" width="16" height="12" viewBox="0 0 16 12"><path d="M3 1.5 H15 M1 6 H13 M5 10.5 H15" stroke="#33cc66" stroke-width="2"/></svg>
<div class="t" style="left:796px;top:981px;font-size:12px;color:#e6e6e6;">Time Editor</div>
<svg class="a" style="left:868px;top:980px;" width="15" height="15" viewBox="0 0 15 15"><path d="M2 1 V13 H14" stroke="#ccc" fill="none"/><path d="M3 12 L12 4" stroke="#ccc"/></svg>
<div class="t" style="left:885px;top:981px;font-size:12px;color:#e6e6e6;">Graph Editor</div>
<div class="a" style="left:494px;top:998px;width:1420px;height:5px;background:#151515;"></div>
<div class="t" style="left:979px;top:613px;font-size:12px;color:#bdbdbd;">Composition 2</div>
<svg class="a" style="left:1186px;top:614px;" width="10" height="10" viewBox="0 0 10 10"><path d="M1 1 L9 9 M9 1 L1 9" stroke="#aaa" stroke-width="1.1"/></svg>
<div class="a" style="left:1204px;top:613px;width:1px;height:12px;background:#aaa;"></div>
<div class="t" style="left:1332px;top:613px;font-size:12px;color:#bdbdbd;">Composition 3</div>
<svg class="a" style="left:1539px;top:614px;" width="10" height="10" viewBox="0 0 10 10"><path d="M1 1 L9 9 M9 1 L1 9" stroke="#aaa" stroke-width="1.1"/></svg>
<div class="a" style="left:1557px;top:610px;width:352px;height:20px;background:#444;border-radius:4px 4px 0 0"></div>
<div class="t" style="left:1684px;top:613px;font-size:12px;color:#e6e6e6;">Composition 4</div>
<svg class="a" style="left:1891px;top:614px;" width="10" height="10" viewBox="0 0 10 10"><path d="M1 1 L9 9 M9 1 L1 9" stroke="#aaa" stroke-width="1.1"/></svg>
<div class="a" style="left:959px;top:630px;width:955px;height:333px;background:#2a2a2a;"></div>
<div class="a" style="left:959px;top:630px;width:4px;height:333px;background:#262626;"></div>
<div class="a" style="left:963px;top:630px;width:12px;height:333px;background:#1e1e1e;"></div>
<div class="a" style="left:966px;top:630px;width:947px;height:24px;background:#222;"></div>
<svg class="a" style="left:966px;top:630px;" width="947" height="24" viewBox="0 0 947 24"><rect x="8.4" y="16" width="1" height="8" fill="#777"/><rect x="19.6" y="20" width="1" height="4" fill="#666"/><rect x="30.7" y="20" width="1" height="4" fill="#666"/><rect x="41.9" y="20" width="1" height="4" fill="#666"/><rect x="53.0" y="20" width="1" height="4" fill="#666"/><rect x="64.2" y="16" width="1" height="8" fill="#777"/><rect x="75.3" y="20" width="1" height="4" fill="#666"/><rect x="86.5" y="20" width="1" height="4" fill="#666"/><rect x="97.7" y="20" width="1" height="4" fill="#666"/><rect x="108.8" y="20" width="1" height="4" fill="#666"/><rect x="120.0" y="16" width="1" height="8" fill="#777"/><rect x="131.1" y="20" width="1" height="4" fill="#666"/><rect x="142.3" y="20" width="1" height="4" fill="#666"/><rect x="153.5" y="20" width="1" height="4" fill="#666"/><rect x="164.6" y="20" width="1" height="4" fill="#666"/><rect x="175.8" y="16" width="1" height="8" fill="#777"/><rect x="186.9" y="20" width="1" height="4" fill="#666"/><rect x="198.1" y="20" width="1" height="4" fill="#666"/><rect x="209.2" y="20" width="1" height="4" fill="#666"/><rect x="220.4" y="20" width="1" height="4" fill="#666"/><rect x="231.6" y="16" width="1" height="8" fill="#777"/><rect x="242.7" y="20" width="1" height="4" fill="#666"/><rect x="253.9" y="20" width="1" height="4" fill="#666"/><rect x="265.0" y="20" width="1" height="4" fill="#666"/><rect x="276.2" y="20" width="1" height="4" fill="#666"/><rect x="287.3" y="16" width="1" height="8" fill="#777"/><rect x="298.5" y="20" width="1" height="4" fill="#666"/><rect x="309.7" y="20" width="1" height="4" fill="#666"/><rect x="320.8" y="20" width="1" height="4" fill="#666"/><rect x="332.0" y="20" width="1" height="4" fill="#666"/><rect x="343.1" y="16" width="1" height="8" fill="#777"/><rect x="354.3" y="20" width="1" height="4" fill="#666"/><rect x="365.5" y="20" width="1" height="4" fill="#666"/><rect x="376.6" y="20" width="1" height="4" fill="#666"/><rect x="387.8" y="20" width="1" height="4" fill="#666"/><rect x="398.9" y="16" width="1" height="8" fill="#777"/><rect x="410.1" y="20" width="1" height="4" fill="#666"/><rect x="421.2" y="20" width="1" height="4" fill="#666"/><rect x="432.4" y="20" width="1" height="4" fill="#666"/><rect x="443.6" y="20" width="1" height="4" fill="#666"/><rect x="454.7" y="16" width="1" height="8" fill="#777"/><rect x="465.9" y="20" width="1" height="4" fill="#666"/><rect x="477.0" y="20" width="1" height="4" fill="#666"/><rect x="488.2" y="20" width="1" height="4" fill="#666"/><rect x="499.3" y="20" width="1" height="4" fill="#666"/><rect x="510.5" y="16" width="1" height="8" fill="#777"/><rect x="521.7" y="20" width="1" height="4" fill="#666"/><rect x="532.8" y="20" width="1" height="4" fill="#666"/><rect x="544.0" y="20" width="1" height="4" fill="#666"/><rect x="555.1" y="20" width="1" height="4" fill="#666"/><rect x="566.3" y="16" width="1" height="8" fill="#777"/><rect x="577.5" y="20" width="1" height="4" fill="#666"/><rect x="588.6" y="20" width="1" height="4" fill="#666"/><rect x="599.8" y="20" width="1" height="4" fill="#666"/><rect x="610.9" y="20" width="1" height="4" fill="#666"/><rect x="622.1" y="16" width="1" height="8" fill="#777"/><rect x="633.2" y="20" width="1" height="4" fill="#666"/><rect x="644.4" y="20" width="1" height="4" fill="#666"/><rect x="655.6" y="20" width="1" height="4" fill="#666"/><rect x="666.7" y="20" width="1" height="4" fill="#666"/><rect x="677.9" y="16" width="1" height="8" fill="#777"/><rect x="689.0" y="20" width="1" height="4" fill="#666"/><rect x="700.2" y="20" width="1" height="4" fill="#666"/><rect x="711.3" y="20" width="1" height="4" fill="#666"/><rect x="722.5" y="20" width="1" height="4" fill="#666"/><rect x="733.7" y="16" width="1" height="8" fill="#777"/><rect x="744.8" y="20" width="1" height="4" fill="#666"/><rect x="756.0" y="20" width="1" height="4" fill="#666"/><rect x="767.1" y="20" width="1" height="4" fill="#666"/><rect x="778.3" y="20" width="1" height="4" fill="#666"/><rect x="789.5" y="16" width="1" height="8" fill="#777"/><rect x="800.6" y="20" width="1" height="4" fill="#666"/><rect x="811.8" y="20" width="1" height="4" fill="#666"/><rect x="822.9" y="20" width="1" height="4" fill="#666"/><rect x="834.1" y="20" width="1" height="4" fill="#666"/><rect x="845.2" y="16" width="1" height="8" fill="#777"/><rect x="856.4" y="20" width="1" height="4" fill="#666"/><rect x="867.6" y="20" width="1" height="4" fill="#666"/><rect x="878.7" y="20" width="1" height="4" fill="#666"/><rect x="889.9" y="20" width="1" height="4" fill="#666"/><rect x="901.0" y="16" width="1" height="8" fill="#777"/><rect x="912.2" y="20" width="1" height="4" fill="#666"/><rect x="923.3" y="20" width="1" height="4" fill="#666"/><rect x="934.5" y="20" width="1" height="4" fill="#666"/></svg>
<div class="t" style="left:944.4px;top:632px;width:60px;text-align:center;font-size:12px;color:#dedede">0</div>
<div class="t" style="left:1000.2px;top:632px;width:60px;text-align:center;font-size:12px;color:#dedede">15</div>
<div class="t" style="left:1056.0px;top:632px;width:60px;text-align:center;font-size:12px;color:#dedede">30</div>
<div class="t" style="left:1111.8px;top:632px;width:60px;text-align:center;font-size:12px;color:#dedede">45</div>
<div class="t" style="left:1167.6px;top:632px;width:60px;text-align:center;font-size:12px;color:#dedede">60</div>
<div class="t" style="left:1223.3px;top:632px;width:60px;text-align:center;font-size:12px;color:#dedede">75</div>
<div class="t" style="left:1279.1px;top:632px;width:60px;text-align:center;font-size:12px;color:#dedede">90</div>
<div class="t" style="left:1334.9px;top:632px;width:60px;text-align:center;font-size:12px;color:#dedede">105</div>
<div class="t" style="left:1390.7px;top:632px;width:60px;text-align:center;font-size:12px;color:#dedede">120</div>
<div class="t" style="left:1446.5px;top:632px;width:60px;text-align:center;font-size:12px;color:#dedede">135</div>
<div class="t" style="left:1502.3px;top:632px;width:60px;text-align:center;font-size:12px;color:#dedede">150</div>
<div class="t" style="left:1558.1px;top:632px;width:60px;text-align:center;font-size:12px;color:#dedede">165</div>
<div class="t" style="left:1613.9px;top:632px;width:60px;text-align:center;font-size:12px;color:#dedede">180</div>
<div class="t" style="left:1669.7px;top:632px;width:60px;text-align:center;font-size:12px;color:#dedede">195</div>
<div class="t" style="left:1725.5px;top:632px;width:60px;text-align:center;font-size:12px;color:#dedede">210</div>
<div class="t" style="left:1781.2px;top:632px;width:60px;text-align:center;font-size:12px;color:#dedede">225</div>
<div class="t" style="left:1837.0px;top:632px;width:60px;text-align:center;font-size:12px;color:#dedede">240</div>
<div class="a" style="left:975px;top:654px;width:930px;height:16px;background:#444;"></div>
<div class="a" style="left:970px;top:653px;width:5px;height:18px;background:#74c4a8;border-radius:1px"></div>
<div class="a" style="left:1905px;top:653px;width:5px;height:18px;background:#74c4a8;border-radius:1px"></div>
<div class="a" style="left:975px;top:674px;width:930px;height:18px;background:repeating-linear-gradient(135deg, #90ffb8 0px, #90ffb8 1.8px, rgba(0,0,0,0) 2px, rgba(0,0,0,0) 12.4px, #90ffb8 12.6px, #90ffb8 14.2px, rgba(0,0,0,0.09) 14.4px, rgba(0,0,0,0.09) 24.7px, #90ffb8 24.9px), #6fe09a;border-radius:2px"></div>
<div class="t" style="left:983px;top:676px;font-size:12px;color:#1a1a1a;">Color Array</div>
<div class="a" style="left:975px;top:696px;width:930px;height:18px;background:repeating-linear-gradient(135deg, #e4ff96 0px, #e4ff96 1.8px, rgba(0,0,0,0) 2px, rgba(0,0,0,0) 12.4px, #e4ff96 12.6px, #e4ff96 14.2px, rgba(0,0,0,0.09) 14.4px, rgba(0,0,0,0.09) 24.7px, #e4ff96 24.9px), #c8ee7c;border-radius:2px"></div>
<div class="t" style="left:983px;top:698px;font-size:12px;color:#1a1a1a;">Random [Index]</div>
<div class="a" style="left:975px;top:718px;width:930px;height:18px;background:repeating-linear-gradient(135deg, #e4ff96 0px, #e4ff96 1.8px, rgba(0,0,0,0) 2px, rgba(0,0,0,0) 12.4px, #e4ff96 12.6px, #e4ff96 14.2px, rgba(0,0,0,0.09) 14.4px, rgba(0,0,0,0.09) 24.7px, #e4ff96 24.9px), #c8ee7c;border-radius:2px"></div>
<div class="t" style="left:983px;top:720px;font-size:12px;color:#1a1a1a;">Oscillator [Position.Z] Cosine</div>
<div class="a" style="left:975px;top:740px;width:930px;height:18px;background:repeating-linear-gradient(135deg, #e4ff96 0px, #e4ff96 1.8px, rgba(0,0,0,0) 2px, rgba(0,0,0,0) 12.4px, #e4ff96 12.6px, #e4ff96 14.2px, rgba(0,0,0,0.09) 14.4px, rgba(0,0,0,0.09) 24.7px, #e4ff96 24.9px), #c8ee7c;border-radius:2px"></div>
<div class="t" style="left:983px;top:742px;font-size:12px;color:#1a1a1a;">Frame [Time]</div>
<div class="a" style="left:975px;top:762px;width:930px;height:18px;background:repeating-linear-gradient(135deg, #e4ff96 0px, #e4ff96 1.8px, rgba(0,0,0,0) 2px, rgba(0,0,0,0) 12.4px, #e4ff96 12.6px, #e4ff96 14.2px, rgba(0,0,0,0.09) 14.4px, rgba(0,0,0,0.09) 24.7px, #e4ff96 24.9px), #c8ee7c;border-radius:2px"></div>
<div class="t" style="left:983px;top:764px;font-size:12px;color:#1a1a1a;">Oscillator [Position.X] Sine</div>
<div class="a" style="left:975px;top:784px;width:930px;height:18px;background:repeating-linear-gradient(135deg, #e4ff96 0px, #e4ff96 1.8px, rgba(0,0,0,0) 2px, rgba(0,0,0,0) 12.4px, #e4ff96 12.6px, #e4ff96 14.2px, rgba(0,0,0,0.09) 14.4px, rgba(0,0,0,0.09) 24.7px, #e4ff96 24.9px), #c8ee7c;border-radius:2px"></div>
<div class="t" style="left:983px;top:786px;font-size:12px;color:#1a1a1a;">3D Matrix [Duplicator]</div>
<div class="a" style="left:975px;top:806px;width:930px;height:18px;background:radial-gradient(rgba(190,150,40,0.55) 0.9px, transparent 1.1px) 0 0/3.5px 3.5px, #ffe58a;border-radius:2px;border:1px solid #fff"></div>
<div class="t" style="left:983px;top:808px;font-size:12px;color:#1a1a1a;">Duplicator</div>
<div class="a" style="left:975px;top:828px;width:930px;height:18px;background:#ffe37a;border-radius:2px"></div>
<div class="t" style="left:983px;top:830px;font-size:12px;color:#1a1a1a;">Ellipse Shape</div>
<div class="a" style="left:975px;top:850px;width:930px;height:18px;background:repeating-linear-gradient(135deg, #7cb0ff 0px, #7cb0ff 1.8px, rgba(0,0,0,0) 2px, rgba(0,0,0,0) 12.4px, #7cb0ff 12.6px, #7cb0ff 14.2px, rgba(0,0,0,0.09) 14.4px, rgba(0,0,0,0.09) 24.7px, #7cb0ff 24.9px), #5b8fe8;border-radius:2px"></div>
<div class="t" style="left:983px;top:852px;font-size:12px;color:#ffffff;">Index Context [Number]</div>
<div class="a" style="left:975px;top:872px;width:930px;height:18px;background:repeating-linear-gradient(135deg, #7cb0ff 0px, #7cb0ff 1.8px, rgba(0,0,0,0) 2px, rgba(0,0,0,0) 12.4px, #7cb0ff 12.6px, #7cb0ff 14.2px, rgba(0,0,0,0.09) 14.4px, rgba(0,0,0,0.09) 24.7px, #7cb0ff 24.9px), #5b8fe8;border-radius:2px"></div>
<div class="t" style="left:983px;top:874px;font-size:12px;color:#ffffff;">String Generator [String]</div>
<div class="a" style="left:975px;top:894px;width:930px;height:18px;background:#b690f8;border-radius:2px"></div>
<div class="t" style="left:983px;top:896px;font-size:12px;color:#ffffff;">Cavalry</div>
<svg class="a" style="left:1064px;top:643px;" width="14" height="11" viewBox="0 0 14 11"><path d="M0 0 H14 L7 10Z" fill="#74c4a8"/></svg>
<div class="a" style="left:1071px;top:653px;width:1px;height:310px;background:#5fb89a;"></div>
<div class="a" style="left:963px;top:963px;width:951px;height:13px;background:#2a2a2a;"></div>
<div class="a" style="left:967px;top:964px;width:946px;height:10px;background:#4a4a4a;border-radius:5px"></div>
<div class="a" style="left:963px;top:976px;width:951px;height:22px;background:#3a3a3a;"></div>
<div class="a" style="left:969px;top:978px;width:17px;height:18px;background:#2e2e2e;border-radius:3px;border:1px solid #222"></div>
<svg class="a" style="left:971px;top:981px;" width="14" height="13" viewBox="0 0 14 13"><path d="M1 2 H13 M1 6 H13 M3 10 H5 M7 10 H9 M11 10 H13" stroke="#ddd" stroke-width="1.3"/></svg>
<div class="a" style="left:990px;top:979px;width:150px;height:16px;background:#2a2a2a;border-radius:3px"></div>
<div class="t" style="left:993px;top:981px;font-size:12px;color:#e6e6e6;">Default Keyframe Layer</div>
<div class="a" style="left:1146px;top:979px;width:70px;height:16px;background:#2a2a2a;border-radius:3px"></div>
<div class="t" style="left:1151px;top:981px;font-size:12px;color:#555;">F</div>
<div class="t" style="left:1164px;top:981px;font-size:12px;color:#e6e6e6;">-</div>
<div class="t" style="left:1222px;top:981px;font-size:12px;color:#e6e6e6;">Align:</div>
<div class="a" style="left:1259px;top:978px;width:52px;height:18px;background:#2a2a2a;border-radius:4px;border:1px solid #222"></div>
<div class="a" style="left:1315px;top:978px;width:18px;height:18px;background:#2a2a2a;border-radius:4px;border:1px solid #222"></div>
<div class="a" style="left:1336px;top:978px;width:31px;height:18px;background:#2a2a2a;border-radius:4px;border:1px solid #222"></div>
<div class="a" style="left:1371px;top:978px;width:32px;height:18px;background:#2a2a2a;border-radius:4px;border:1px solid #222"></div>
<svg class="a" style="left:1259px;top:978px;" width="52" height="18" viewBox="0 0 52 18"><path d="M3 3 V15 M5 5 H8 M5 13 H12" stroke="#ddd" stroke-width="1.3"/><circle cx="6" cy="9" r="1" fill="#74c4a8"/><path d="M26 3 V15 M21 6 H24 M28 6 H31 M21 13 H31" stroke="#ddd" stroke-width="1.3"/><circle cx="26" cy="9" r="1.2" fill="#74c4a8"/><path d="M48 3 V15 M41 5 H44 M39 13 H46" stroke="#ddd" stroke-width="1.3"/><circle cx="45" cy="9" r="1" fill="#74c4a8"/></svg>
<svg class="a" style="left:1315px;top:978px;" width="18" height="18" viewBox="0 0 18 18"><rect x="3" y="3" width="12" height="12" fill="none" stroke="#ddd" stroke-width="1" stroke-dasharray="3 2"/><circle cx="9" cy="9" r="1.3" fill="#ddd"/></svg>
<svg class="a" style="left:1336px;top:978px;" width="31" height="18" viewBox="0 0 31 18"><path d="M4 12 A5 5 0 1 1 13 12" stroke="#ddd" stroke-width="2" fill="none"/><path d="M22 5 L27 9 L22 13Z" fill="none" stroke="#999"/></svg>
<div class="a" style="left:1354px;top:980px;width:1px;height:14px;background:#3a3a3a;"></div>
<svg class="a" style="left:1371px;top:978px;" width="32" height="18" viewBox="0 0 32 18"><path d="M2 9 H16 M6 5 V13 M9 3 V15 M12 6 V12" stroke="#ddd" stroke-width="1.1"/><path d="M23 5 L28 9 L23 13Z" fill="none" stroke="#999"/></svg>
<div class="a" style="left:1389px;top:980px;width:1px;height:14px;background:#3a3a3a;"></div>
<svg class="a" style="left:1742px;top:980px;" width="16" height="16" viewBox="0 0 16 16"><circle cx="7" cy="7" r="5.5" fill="none" stroke="#ddd" stroke-width="1.1"/><path d="M4.5 7 H9.5" stroke="#ddd" stroke-width="1.1"/><path d="M11 11 L14 14" stroke="#ddd" stroke-width="1.8"/></svg>
<div class="a" style="left:1767px;top:985px;width:115px;height:4px;background:#3f3f3f;border-radius:2px"></div>
<svg class="a" style="left:1762px;top:981px;" width="12" height="12" viewBox="0 0 12 12"><circle cx="6" cy="6" r="5" fill="#74c4a8"/><circle cx="6" cy="6" r="2" fill="#5aa88c"/></svg>
<svg class="a" style="left:1886px;top:980px;" width="16" height="16" viewBox="0 0 16 16"><circle cx="7" cy="7" r="5.5" fill="none" stroke="#ddd" stroke-width="1.1"/><path d="M4.5 7 H9.5 M7 4.5 V9.5" stroke="#ddd" stroke-width="1.1"/><path d="M11 11 L14 14" stroke="#ddd" stroke-width="1.8"/></svg>
<div class="a" style="left:494px;top:1004px;width:1420px;height:22px;background:#3a3a3a;"></div>
<div class="a" style="left:0px;top:1026px;width:1920px;height:5px;background:#1f1f1f;"></div>
<div class="a" style="left:498px;top:1008px;width:2px;height:2px;background:#888;"></div>
<div class="a" style="left:498px;top:1012px;width:2px;height:2px;background:#888;"></div>
<div class="a" style="left:498px;top:1016px;width:2px;height:2px;background:#888;"></div>
<div class="a" style="left:507px;top:1005px;width:17px;height:19px;background:#2e2e2e;border-radius:3px;border:1px solid #222"></div>
<svg class="a" style="left:507px;top:1006px;" width="17" height="17" viewBox="0 0 17 17"><path d="M2 3 H15 V12 H14 L13 15 L10 12 H2Z" fill="#ddd"/><path d="M4 5.5 H6 M7 5.5 H13 M4 7.5 H6 M7 7.5 H13 M4 9.5 H6 M7 9.5 H13" stroke="#222" stroke-width="1"/><path d="M14 16 L16.5 13.5 V16Z" fill="#6cb"/></svg>
<div class="a" style="left:528px;top:1007px;width:18px;height:16px;background:#2eb85c;border-radius:2px"></div>
<div class="t" style="left:534px;top:1009px;font-size:12px;color:#222;">2</div>
<svg class="a" style="left:553px;top:1011px;" width="9" height="9" viewBox="0 0 9 9"><circle cx="4.5" cy="4.5" r="3.5" fill="#33cc66"/></svg>
<div class="t" style="left:565px;top:1008px;font-size:12px;color:#e6e6e6">Connected: <span style="color:#e070f0">Oscillator [Position.X] Sine</span> to <span style="color:#e6c87a">Oscillator [Position.Z] Cosine.</span></div>
<div class="t" style="left:1482px;top:1009px;font-size:11px;letter-spacing:-0.25px;color:#e6e6e6;font-style:italic">Click to see next message</div>
<div class="a" style="left:1610px;top:1006px;width:80px;height:18px;background:#c9b265;border-radius:2px"></div>
<div class="t" style="left:1616px;top:1009px;font-size:12px;color:#2a2a2a;">Feedback</div>
<svg class="a" style="left:1672px;top:1008px;" width="14" height="14" viewBox="0 0 14 14"><path d="M2 1 H9 L12 4 V13 H2Z" fill="#eee"/><path d="M5 11 L11 5" stroke="#f06040" stroke-width="2"/></svg>
<div class="a" style="left:1693px;top:1006px;width:109px;height:18px;background:#2ec866;border-radius:2px"></div>
<div class="t" style="left:1699px;top:1009px;font-size:12px;color:#1a1a1a;">Upgrade to Pro</div>
<svg class="a" style="left:1780px;top:1009px;" width="16" height="12" viewBox="0 0 16 12"><ellipse cx="5" cy="7" rx="4" ry="4.5" fill="#f5c030"/><ellipse cx="11" cy="7" rx="4" ry="4.5" fill="#f5c030"/></svg>
<div class="a" style="left:1805px;top:1006px;width:107px;height:18px;background:#3aaae8;border-radius:2px"></div>
<div class="t" style="left:1811px;top:1009px;font-size:12px;color:#1a1a1a;">Tips and Tricks</div>
<svg class="a" style="left:1891px;top:1008px;" width="14" height="14" viewBox="0 0 14 14"><path d="M12 1 L5 8 L7 10 L13 3Z" fill="#eee"/><path d="M5 8 L2 9 L4 11Z" fill="#e04040"/><path d="M6 11 L3 13" stroke="#f08030" stroke-width="2"/></svg>
<div class="a" style="left:488px;top:85px;width:6px;height:941px;background:#141414;"></div>
<div class="a" style="left:524px;top:85px;width:6px;height:495px;background:#141414;"></div>
<div class="a" style="left:1587px;top:85px;width:6px;height:495px;background:#141414;"></div>
<div class="a" style="left:6px;top:258px;width:482px;height:7px;background:#141414;"></div>
<div class="a" style="left:494px;top:580px;width:1420px;height:6px;background:#141414;"></div>
<div class="a" style="left:494px;top:998px;width:1420px;height:5px;background:#141414;"></div>
<div class="a" style="left:1593px;top:485px;width:321px;height:5px;background:#141414;"></div></body></html>
